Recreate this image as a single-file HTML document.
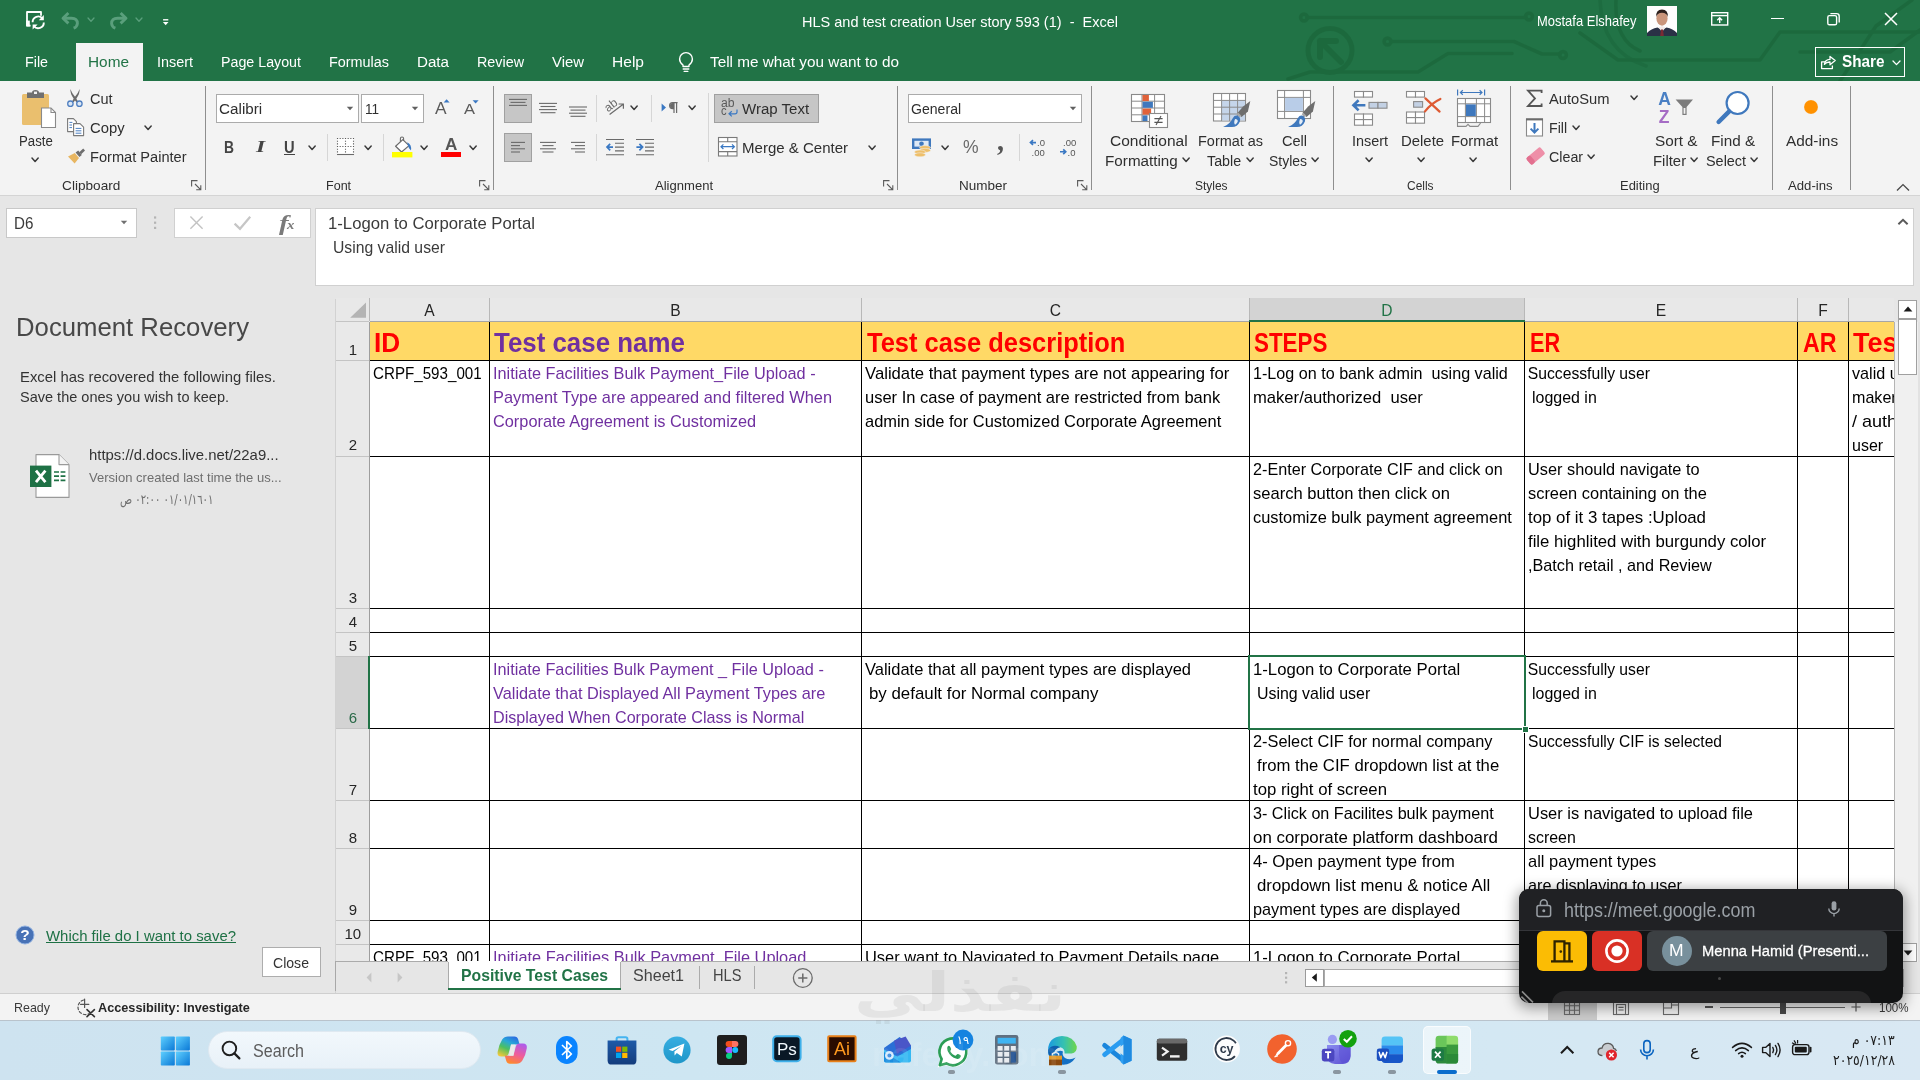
<!DOCTYPE html>
<html lang="en">
<head>
<meta charset="utf-8">
<title>HLS and test creation User story 593 (1) - Excel</title>
<style>
html,body{margin:0;padding:0;}
body{width:1920px;height:1080px;overflow:hidden;position:relative;background:#e6e6e6;font-family:"Liberation Sans",sans-serif;}
.a{position:absolute;display:block;}
.t{position:absolute;white-space:pre;transform-origin:0 50%;}
</style>
</head>
<body>
<div id="app" style="position:absolute;left:0;top:0;width:1920px;height:1080px;overflow:hidden;will-change:transform;">
<div class="a" style="left:0px;top:0px;width:1920px;height:81px;background:#217346;"></div>
<svg class="a" style="left:1280px;top:0px;" width="640" height="81" viewBox="0 0 640 81">
<g fill="none" stroke="#1a6439" stroke-width="3.6" stroke-linecap="round" stroke-linejoin="round" opacity="0.62">
<path d="M27 17.5 H246"/><circle cx="24" cy="17.5" r="3.4"/><circle cx="249" cy="16.5" r="3.4"/>
<path d="M111 41.5 H234 L262 54 H280"/><circle cx="107.5" cy="41.5" r="3.4"/><circle cx="283" cy="55" r="3.4"/>
<path d="M8 79 L30 72 H138 L168 53.5 H232"/>
<circle cx="50" cy="50.5" r="22" stroke-width="5"/>
<path d="M40 41 L61 62 M40 41 H56 M40 41 V57" stroke-width="6"/>
<path d="M300 33 L338 60 H480 L500 32 H640"/>
<path d="M336 0 Q334 40 360 51" />
<path d="M320 0 Q322 52 366 66" opacity="0.7"/>
<path d="M632 0 L596 26 L560 81"/>
<path d="M640 30 L610 52 H520"/>
</g></svg>
<svg class="a" style="left:24px;top:9px;" width="24" height="24" viewBox="0 0 24 24">
<g fill="none" stroke="#fff" stroke-width="1.8" stroke-linejoin="round">
<path d="M10.4 3 H3 V16.6 H6.6"/><path d="M10 3 H17 V6.8"/></g>
<rect x="2.2" y="11.6" width="3.6" height="5.8" fill="#fff"/>
<g fill="none" stroke="#fff" stroke-width="1.9" stroke-linecap="butt">
<path d="M8.6 13.2 A5.6 5.6 0 0 1 18.6 9.6"/><path d="M19.8 13.4 A5.6 5.6 0 0 1 9.8 17"/></g>
<path d="M19.8 6 V11.2 H14.8 Z" fill="#fff"/><path d="M8.6 20.6 V15.4 H13.6 Z" fill="#fff"/>
</svg>
<svg class="a" style="left:60px;top:10px;" width="22" height="20" viewBox="0 0 22 20"><g fill="none" stroke="#5a9f7c" stroke-width="2.9" stroke-linejoin="round"><path d="M8.4 3 L3 8.2 L8.4 13.4"/><path d="M4 8.2 H11.4 Q17.6 8.4 17.4 13.6 Q17 17 13.6 18.2"/></g></svg>
<svg class="a" style="left:86.4px;top:15.9px;" width="10" height="7.2" viewBox="0 0 10 7.2"><path d="M2 2 L5.0 5.2 L8 2" fill="none" stroke="#5a9f7c" stroke-width="1.3" stroke-linecap="round" stroke-linejoin="round"/></svg>
<svg class="a" style="left:107px;top:10px;" width="22" height="20" viewBox="0 0 22 20"><g fill="none" stroke="#5a9f7c" stroke-width="2.9" stroke-linejoin="round"><path d="M13.6 3 L19 8.2 L13.6 13.4"/><path d="M18 8.2 H10.6 Q4.4 8.4 4.6 13.6 Q5 17 8.4 18.2"/></g></svg>
<svg class="a" style="left:134.4px;top:15.9px;" width="10" height="7.2" viewBox="0 0 10 7.2"><path d="M2 2 L5.0 5.2 L8 2" fill="none" stroke="#5a9f7c" stroke-width="1.3" stroke-linecap="round" stroke-linejoin="round"/></svg>
<svg class="a" style="left:160px;top:16px;" width="10" height="10" viewBox="0 0 10 10"><path d="M3.1 3.8 H8.3" stroke="#fff" stroke-width="1.4"/><path d="M2.9 6 H8.5 L5.7 9.3 Z" fill="#fff"/></svg>
<span class="t" style="top:13.10px;font-size:15px;line-height:18px;color:#fff;left:802.00px;transform:scaleX(0.9669);">HLS and test creation User story 593 (1)  -  Excel</span>
<span class="t" style="top:12.10px;font-size:15px;line-height:18px;color:#fff;left:1537.00px;transform:scaleX(0.8647);">Mostafa Elshafey</span>
<svg class="a" style="left:1647px;top:6px;" width="30" height="30" viewBox="0 0 30 30">
<rect width="30" height="30" fill="#fdfdfd"/>
<path d="M0 30 V27 Q4 22.5 10.5 21.5 L15 24 L19.5 21.5 Q26 22.5 30 27 V30 Z" fill="#2a3146"/>
<path d="M11.5 21.5 L15 26 L18.5 21.5 L15 20 Z" fill="#f2e9e6"/>
<path d="M14 23.5 h2 l0.8 6.5 h-3.6 z" fill="#7a2a33"/>
<ellipse cx="15" cy="12.5" rx="5.6" ry="7.2" fill="#c9957b"/>
<path d="M9.2 11 Q8.6 3.6 15 3.4 Q21.4 3.6 20.8 11 Q20 7 15 6.8 Q10 7 9.2 11 Z" fill="#2b1f1c"/>
</svg>
<svg class="a" style="left:1710px;top:11px;" width="20" height="16" viewBox="0 0 20 16"><g fill="none" stroke="#fff" stroke-width="1.4"><rect x="1.7" y="1.7" width="16" height="12.3"/><path d="M1.7 4.6 H17.7"/><path d="M9.7 12 V7 M7.3 9.2 L9.7 6.8 L12.1 9.2"/></g></svg>
<div class="a" style="left:1771px;top:17.5px;width:12.5px;height:1.4px;background:#fff;"></div>
<svg class="a" style="left:1826px;top:11px;" width="16" height="16" viewBox="0 0 16 16"><g fill="none" stroke="#fff" stroke-width="1.4"><rect x="1.8" y="4.6" width="8.8" height="9.2" rx="1.6"/><path d="M4.4 2.6 H10.6 A2.6 2.6 0 0 1 13.2 5.2 V11.6"/></g></svg>
<svg class="a" style="left:1883px;top:11px;" width="16" height="16" viewBox="0 0 16 16"><path d="M2 2 L14 14 M14 2 L2 14" stroke="#fff" stroke-width="1.5" fill="none"/></svg>
<div class="a" style="left:1815px;top:47px;width:90px;height:30px;border:1px solid #fff;box-sizing:border-box;"></div>
<svg class="a" style="left:1820px;top:53px;" width="18" height="18" viewBox="0 0 18 18"><g fill="none" stroke="#fff" stroke-width="1.3" stroke-linejoin="round"><path d="M5 8.8 H1.6 V15.6 H12.4 V12.6"/><path d="M4.4 11.4 Q5 6.6 10 6.4 V3.4 L15.2 7.6 L10 11.8 V9 Q6.6 8.8 4.4 11.4 Z"/></g></svg>
<span class="t" style="top:51.91px;font-size:17px;line-height:20px;color:#fff;font-weight:700;left:1841.50px;transform:scaleX(0.8995);">Share</span>
<svg class="a" style="left:1890.5px;top:58.7px;" width="11" height="7.6" viewBox="0 0 11 7.6"><path d="M2 2 L5.5 5.6 L9 2" fill="none" stroke="#fff" stroke-width="1.3" stroke-linecap="round" stroke-linejoin="round"/></svg>
<div class="a" style="left:76px;top:43px;width:67px;height:38px;background:#f3f3f3;"></div>
<span class="t" style="top:52.43px;font-size:15.5px;line-height:19px;color:#fff;left:25.00px;transform:scaleX(0.9206);">File</span>
<span class="t" style="top:52.43px;font-size:15.5px;line-height:19px;color:#217346;left:88.00px;transform:scaleX(0.9913);">Home</span>
<span class="t" style="top:52.43px;font-size:15.5px;line-height:19px;color:#fff;left:157.00px;transform:scaleX(0.9287);">Insert</span>
<span class="t" style="top:52.43px;font-size:15.5px;line-height:19px;color:#fff;left:221.00px;transform:scaleX(0.9190);">Page Layout</span>
<span class="t" style="top:52.43px;font-size:15.5px;line-height:19px;color:#fff;left:329.00px;transform:scaleX(0.9287);">Formulas</span>
<span class="t" style="top:52.43px;font-size:15.5px;line-height:19px;color:#fff;left:417.00px;transform:scaleX(0.9771);">Data</span>
<span class="t" style="top:52.43px;font-size:15.5px;line-height:19px;color:#fff;left:477.00px;transform:scaleX(0.9247);">Review</span>
<span class="t" style="top:52.43px;font-size:15.5px;line-height:19px;color:#fff;left:552.00px;transform:scaleX(0.9602);">View</span>
<span class="t" style="top:52.43px;font-size:15.5px;line-height:19px;color:#fff;left:612.00px;transform:scaleX(1.0034);">Help</span>
<svg class="a" style="left:676px;top:50px;" width="20" height="24" viewBox="0 0 20 24"><g fill="none" stroke="#fff" stroke-width="1.4" stroke-linecap="round"><path d="M7 16.5 V15 Q3.6 12.6 3.6 9 A6.4 6.4 0 0 1 16.4 9 Q16.4 12.6 13 15 V16.5 Z" stroke-linejoin="round"/><path d="M7.2 19 H12.8 M8.2 21.4 H11.8"/></g></svg>
<span class="t" style="top:52.43px;font-size:15.5px;line-height:19px;color:#fff;left:710.00px;transform:scaleX(0.9881);">Tell me what you want to do</span>
<div class="a" style="left:0px;top:81px;width:1920px;height:114.5px;background:#f3f3f3;"></div>
<div class="a" style="left:0px;top:195px;width:1920px;height:1px;background:#d4d4d4;"></div>
<div class="a" style="left:205px;top:86.4px;width:1px;height:103.6px;background:#8e8e8e;"></div>
<div class="a" style="left:493px;top:86.4px;width:1px;height:103.6px;background:#8e8e8e;"></div>
<div class="a" style="left:897px;top:86.4px;width:1px;height:103.6px;background:#8e8e8e;"></div>
<div class="a" style="left:1091px;top:86.4px;width:1px;height:103.6px;background:#8e8e8e;"></div>
<div class="a" style="left:1333px;top:86.4px;width:1px;height:103.6px;background:#8e8e8e;"></div>
<div class="a" style="left:1510px;top:86.4px;width:1px;height:103.6px;background:#8e8e8e;"></div>
<div class="a" style="left:1772px;top:86.4px;width:1px;height:103.6px;background:#8e8e8e;"></div>
<div class="a" style="left:1850px;top:86.4px;width:1px;height:103.6px;background:#8e8e8e;"></div>
<div class="a" style="left:327.0px;top:134px;width:1px;height:27px;background:#d6d6d6;"></div>
<div class="a" style="left:383.2px;top:134px;width:1px;height:27px;background:#d6d6d6;"></div>
<div class="a" style="left:595.9px;top:95px;width:1px;height:27px;background:#d6d6d6;"></div>
<div class="a" style="left:595.9px;top:134px;width:1px;height:27px;background:#d6d6d6;"></div>
<div class="a" style="left:650.8px;top:95px;width:1px;height:27px;background:#d6d6d6;"></div>
<div class="a" style="left:707.8px;top:93px;width:1px;height:69px;background:#d6d6d6;"></div>
<div class="a" style="left:1019.0px;top:134px;width:1px;height:27px;background:#d6d6d6;"></div>
<svg class="a" style="left:20px;top:88px;" width="38" height="42" viewBox="0 0 38 42">
<rect x="2" y="6" width="27" height="31" rx="1.5" fill="#eabf6e"/>
<path d="M7 6 V4.6 H12 Q12 2 15.5 2 Q19 2 19 4.6 H24 V10 H7 Z" fill="#707070"/>
<rect x="14" y="3.6" width="3" height="2.4" fill="#f3f3f3"/>
<path d="M21.5 20 H31 L35.5 24.5 V39.5 H21.5 Z" fill="#fff" stroke="#8a8a8a" stroke-width="1.1"/>
<path d="M31 20 V24.5 H35.5" fill="none" stroke="#8a8a8a" stroke-width="1.1"/>
</svg>
<span class="t" style="top:132.03px;font-size:15.2px;line-height:18px;color:#2f2f2f;left:19.10px;transform:scaleX(0.8702);">Paste</span>
<svg class="a" style="left:30.4px;top:155.6px;" width="10.2" height="7.4" viewBox="0 0 10.2 7.4"><path d="M2 2 L5.1 5.4 L8.2 2" fill="none" stroke="#3a3a3a" stroke-width="1.5" stroke-linecap="round" stroke-linejoin="round"/></svg>
<svg class="a" style="left:65px;top:87px;" width="20" height="22" viewBox="0 0 20 22">
<path d="M5.4 2 Q6.6 6 10.6 10.6 L13 14.4 L11.4 15.2 L8.6 11.4 Q5 6.6 5.4 2 Z" fill="#6a6a6a"/>
<path d="M14.6 2 Q13.4 6 9.4 10.6 L7 14.4 L8.6 15.2 L11.4 11.4 Q15 6.6 14.6 2 Z" fill="#6a6a6a"/>
<circle cx="5.4" cy="16.7" r="2.7" fill="#dbe7f5" stroke="#4f7fc0" stroke-width="1.3"/>
<circle cx="14.4" cy="16.7" r="2.7" fill="#dbe7f5" stroke="#4f7fc0" stroke-width="1.3"/></svg>
<span class="t" style="top:90.03px;font-size:15.2px;line-height:18px;color:#2f2f2f;left:89.60px;transform:scaleX(0.9560);">Cut</span>
<svg class="a" style="left:65px;top:116px;" width="22" height="22" viewBox="0 0 22 22">
<g fill="#fff" stroke="#7a7a7a" stroke-width="1.1" stroke-linejoin="round">
<path d="M2.6 2.6 H8.4 L11.4 5.6 V15.6 H2.6 Z"/>
<path d="M8.6 7.6 H15 L18.6 11.2 V19.6 H8.6 Z"/>
</g>
<g stroke="#4a7fc1" stroke-width="1" fill="none"><path d="M4.4 6.4 H7.4 M4.4 9 H7 M4.4 11.6 H7 M10.6 12.4 H16.4 M10.6 14.8 H16.4 M10.6 17.2 H16.4"/></g>
</svg>
<span class="t" style="top:119.23px;font-size:15.2px;line-height:18px;color:#2f2f2f;left:89.60px;transform:scaleX(0.9755);">Copy</span>
<svg class="a" style="left:143.1px;top:124.3px;" width="10.2" height="7.4" viewBox="0 0 10.2 7.4"><path d="M2 2 L5.1 5.4 L8.2 2" fill="none" stroke="#3a3a3a" stroke-width="1.5" stroke-linecap="round" stroke-linejoin="round"/></svg>
<svg class="a" style="left:66px;top:146px;" width="22" height="20" viewBox="0 0 22 20">
<path d="M13.2 6.2 L17.2 2.6 L19 4.6 L15.2 8.2 Z" fill="#6e6e6e"/>
<path d="M9.6 6.4 L12.2 4.6 L15.8 9 L13.4 11 Z" fill="#6e6e6e"/>
<path d="M2 10.6 L8.8 7 L13 12 L8.6 17.6 Z" fill="#e8b661"/>
</svg>
<span class="t" style="top:148.03px;font-size:15.2px;line-height:18px;color:#2f2f2f;left:89.60px;transform:scaleX(0.9616);">Format Painter</span>
<span class="t" style="top:177.59px;font-size:13.6px;line-height:16px;color:#2f2f2f;left:62.10px;">Clipboard</span>
<svg class="a" style="left:190.5px;top:179.5px;" width="11" height="11" viewBox="0 0 11 11"><g fill="none" stroke="#5a5a5a" stroke-width="1.1"><path d="M0.6 6.5 V0.6 H6.5"/><path d="M4 4 L9.6 9.6 M9.8 5.2 V9.8 H5.2"/></g></svg>
<div class="a" style="left:216px;top:94.3px;width:143px;height:28.4px;background:#fff;border:1px solid #ababab;box-sizing:border-box;"></div>
<span class="t" style="top:99.53px;font-size:15.2px;line-height:18px;color:#2f2f2f;left:219.10px;">Calibri</span>
<svg class="a" style="left:346px;top:106.1px;" width="8" height="5" viewBox="0 0 8 5"><path d="M0.8 0.8 H7.2 L4 4.2 Z" fill="#606060"/></svg>
<div class="a" style="left:361px;top:94.3px;width:63px;height:28.4px;background:#fff;border:1px solid #ababab;box-sizing:border-box;"></div>
<span class="t" style="top:99.53px;font-size:15.2px;line-height:18px;color:#2f2f2f;left:365.10px;transform:scaleX(0.8944);">11</span>
<svg class="a" style="left:410.8px;top:106.1px;" width="8" height="5" viewBox="0 0 8 5"><path d="M0.8 0.8 H7.2 L4 4.2 Z" fill="#606060"/></svg>
<span class="t" style="top:98.48px;font-size:16.5px;line-height:20px;color:#5a5a5a;left:434.60px;transform:scaleX(1.0530);">A</span>
<svg class="a" style="left:443px;top:98px;" width="8" height="6" viewBox="0 0 8 6"><path d="M0.6 4.4 L3.6 1.2 L6.6 4.4 Z" fill="#3a78c3"/></svg>
<span class="t" style="top:99.33px;font-size:15.5px;line-height:19px;color:#5a5a5a;left:463.80px;transform:scaleX(1.0634);">A</span>
<svg class="a" style="left:472px;top:98.6px;" width="8" height="6" viewBox="0 0 8 6"><path d="M0.6 1.2 L3.6 4.4 L6.6 1.2 Z" fill="#3a78c3"/></svg>
<span class="t" style="top:137.48px;font-size:16.5px;line-height:20px;color:#444;font-weight:700;left:224.30px;transform:scaleX(0.8388);">B</span>
<span class="t" style="top:137.46px;font-size:17px;line-height:20px;color:#444;font-family:'Liberation Serif', serif;font-weight:700;font-style:italic;left:255.60px;transform:scaleX(1.3887);">I</span>
<span class="t" style="top:137.96px;font-size:16px;line-height:19px;color:#444;font-weight:700;left:284.20px;transform:scaleX(0.9168);">U</span>
<div class="a" style="left:284px;top:154.4px;width:11px;height:1.1px;background:#444;"></div>
<svg class="a" style="left:307.2px;top:144.3px;" width="10.2" height="7.4" viewBox="0 0 10.2 7.4"><path d="M2 2 L5.1 5.4 L8.2 2" fill="none" stroke="#3a3a3a" stroke-width="1.5" stroke-linecap="round" stroke-linejoin="round"/></svg>
<svg class="a" style="left:336px;top:137px;" width="20" height="20" viewBox="0 0 20 20"><rect x="1.5" y="1.5" width="16" height="16" fill="#fff"/><g fill="none" stroke="#5a5a5a" stroke-width="1.1" stroke-dasharray="1.1 1.56"><path d="M1 1.5 H18 M1 9.5 H18 M1.5 1 V17.5 M9.5 1 V17.5 M17.5 1 V17.5"/></g><path d="M1 17.5 H18" stroke="#6a6a6a" stroke-width="1.1"/></svg>
<svg class="a" style="left:363.2px;top:144.3px;" width="10.2" height="7.4" viewBox="0 0 10.2 7.4"><path d="M2 2 L5.1 5.4 L8.2 2" fill="none" stroke="#3a3a3a" stroke-width="1.5" stroke-linecap="round" stroke-linejoin="round"/></svg>
<svg class="a" style="left:391px;top:135px;" width="24" height="24" viewBox="0 0 24 24">
<path d="M4.6 11.2 L11.8 4.6 L18 10.6 L10.6 17 Z" fill="#fff" stroke="#6a6a6a" stroke-width="1.2" stroke-linejoin="round"/>
<path d="M9.4 6.8 V3.6 Q9.4 2 11 2 Q12.6 2 12.6 3.6 V5.6" fill="none" stroke="#6a6a6a" stroke-width="1.1"/>
<path d="M16.2 7.2 Q21 9.6 20 15.6 Q17.6 13.6 17 10.4 Z" fill="#3a78c3"/>
<rect x="1" y="17" width="20.4" height="5.4" fill="#ffff00"/>
</svg>
<svg class="a" style="left:419.2px;top:144.3px;" width="10.2" height="7.4" viewBox="0 0 10.2 7.4"><path d="M2 2 L5.1 5.4 L8.2 2" fill="none" stroke="#3a3a3a" stroke-width="1.5" stroke-linecap="round" stroke-linejoin="round"/></svg>
<span class="t" style="top:135.11px;font-size:17px;line-height:20px;color:#555;font-weight:700;left:444.70px;transform:scaleX(1.0097);">A</span>
<div class="a" style="left:441px;top:152px;width:20px;height:5.4px;background:#ff0000;"></div>
<svg class="a" style="left:468.2px;top:144.3px;" width="10.2" height="7.4" viewBox="0 0 10.2 7.4"><path d="M2 2 L5.1 5.4 L8.2 2" fill="none" stroke="#3a3a3a" stroke-width="1.5" stroke-linecap="round" stroke-linejoin="round"/></svg>
<span class="t" style="top:177.59px;font-size:13.6px;line-height:16px;color:#2f2f2f;left:326.10px;transform:scaleX(0.9227);">Font</span>
<svg class="a" style="left:478.8px;top:179.5px;" width="11" height="11" viewBox="0 0 11 11"><g fill="none" stroke="#5a5a5a" stroke-width="1.1"><path d="M0.6 6.5 V0.6 H6.5"/><path d="M4 4 L9.6 9.6 M9.8 5.2 V9.8 H5.2"/></g></svg>
<div class="a" style="left:504px;top:94.3px;width:28px;height:28.4px;background:#c6c6c6;border:1px solid #a0a0a0;box-sizing:border-box;"></div>
<svg class="a" style="left:507px;top:96px;" width="22" height="22" viewBox="0 0 22 22"><g stroke="#6a6a6a" stroke-width="1.1" fill="none"><path d="M2 3.4 H20"/><path d="M3.5 6.4 H18.5"/><path d="M2 9.4 H20"/></g></svg>
<svg class="a" style="left:537px;top:98px;" width="22" height="22" viewBox="0 0 22 22"><g stroke="#6a6a6a" stroke-width="1.1" fill="none"><path d="M2 5.4 H20"/><path d="M3.5 8.5 H18.5"/><path d="M2 11.6 H20"/><path d="M3.5 14.7 H18.5"/></g></svg>
<svg class="a" style="left:567px;top:102px;" width="22" height="22" viewBox="0 0 22 22"><g stroke="#6a6a6a" stroke-width="1.1" fill="none"><path d="M2 5 H20"/><path d="M3.5 8.1 H18.5"/><path d="M2 11.2 H20"/><path d="M3.5 14.3 H18.5"/></g></svg>
<svg class="a" style="left:603px;top:96px;" width="24" height="22" viewBox="0 0 24 22">
<text x="3" y="13" font-size="12" fill="#6a6a6a" transform="rotate(-38 9 12)" font-family="Liberation Sans, sans-serif">ab</text>
<path d="M6.6 18.6 L20.2 8.2 M15.6 8 H20.4 V12.8" fill="none" stroke="#6a6a6a" stroke-width="1.2"/></svg>
<svg class="a" style="left:629.4px;top:104.3px;" width="10.2" height="7.4" viewBox="0 0 10.2 7.4"><path d="M2 2 L5.1 5.4 L8.2 2" fill="none" stroke="#3a3a3a" stroke-width="1.5" stroke-linecap="round" stroke-linejoin="round"/></svg>
<svg class="a" style="left:659px;top:100px;" width="20" height="16" viewBox="0 0 20 16"><path d="M2.6 3.6 L7 7.6 L2.6 11.6 Z" fill="#3a78c3"/>
<path d="M15 2.6 V13 M17.6 2.6 V13 M18.6 2.6 H13.6 A3 3 0 0 0 13.6 8.6 H15" fill="none" stroke="#6a6a6a" stroke-width="1.2"/>
<path d="M15 3 H13.6 A2.6 2.6 0 0 0 13.6 8.2 H15 Z" fill="#6a6a6a"/></svg>
<svg class="a" style="left:687.4px;top:104.3px;" width="10.2" height="7.4" viewBox="0 0 10.2 7.4"><path d="M2 2 L5.1 5.4 L8.2 2" fill="none" stroke="#3a3a3a" stroke-width="1.5" stroke-linecap="round" stroke-linejoin="round"/></svg>
<div class="a" style="left:714px;top:94.3px;width:105px;height:28.4px;background:#c6c6c6;border:1px solid #a0a0a0;box-sizing:border-box;"></div>
<span class="t" style="top:95.67px;font-size:12.5px;line-height:15px;color:#5a5a5a;left:720.50px;transform:scaleX(0.9780);">ab</span>
<span class="t" style="top:104.37px;font-size:12.5px;line-height:15px;color:#5a5a5a;left:720.50px;transform:scaleX(0.8960);">c</span>
<svg class="a" style="left:727px;top:108px;" width="12" height="10" viewBox="0 0 12 10"><path d="M10 1.4 V4 Q10 5.8 8 5.8 H2.2 M4.8 3.2 L2 5.8 L4.8 8.4" fill="none" stroke="#3a78c3" stroke-width="1.2"/></svg>
<span class="t" style="top:99.53px;font-size:15.2px;line-height:18px;color:#2f2f2f;left:742.10px;transform:scaleX(0.9895);">Wrap Text</span>
<div class="a" style="left:504px;top:133.3px;width:28px;height:28.4px;background:#c6c6c6;border:1px solid #a0a0a0;box-sizing:border-box;"></div>
<svg class="a" style="left:507px;top:137px;" width="22" height="22" viewBox="0 0 22 22"><g stroke="#6a6a6a" stroke-width="1.1" fill="none"><path d="M4 5.4 H18"/><path d="M4 8.6 H13"/><path d="M4 11.8 H18"/><path d="M4 15 H13"/></g></svg>
<svg class="a" style="left:537px;top:137px;" width="22" height="22" viewBox="0 0 22 22"><g stroke="#6a6a6a" stroke-width="1.1" fill="none"><path d="M3 5.4 H19"/><path d="M5.5 8.6 H16.5"/><path d="M3 11.8 H19"/><path d="M5.5 15 H16.5"/></g></svg>
<svg class="a" style="left:567px;top:137px;" width="22" height="22" viewBox="0 0 22 22"><g stroke="#6a6a6a" stroke-width="1.1" fill="none"><path d="M4 5.4 H18"/><path d="M8 8.6 H18"/><path d="M4 11.8 H18"/><path d="M8 15 H18"/></g></svg>
<svg class="a" style="left:604px;top:137px;" width="22" height="20" viewBox="0 0 22 20"><g stroke="#6a6a6a" stroke-width="1.1" fill="none"><path d="M2 2.5 H20 M11 6.3 H20 M11 10.1 H20 M11 13.9 H20 M2 17.7 H20"/></g>
<path d="M9 10.1 H3.2 M6.2 6.9 L3 10.1 L6.2 13.3" fill="none" stroke="#3a78c3" stroke-width="1.7"/></svg>
<svg class="a" style="left:634px;top:137px;" width="22" height="20" viewBox="0 0 22 20"><g stroke="#6a6a6a" stroke-width="1.1" fill="none"><path d="M2 2.5 H20 M11 6.3 H20 M11 10.1 H20 M11 13.9 H20 M2 17.7 H20"/></g>
<path d="M2.4 10.1 H8.4 M5.4 6.9 L8.6 10.1 L5.4 13.3" fill="none" stroke="#3a78c3" stroke-width="1.7"/></svg>
<svg class="a" style="left:717px;top:136px;" width="22" height="22" viewBox="0 0 22 22"><g fill="#fff" stroke="#7a7a7a" stroke-width="1.1"><rect x="1.5" y="1.5" width="18.5" height="18.5"/><path d="M1.5 5.8 H20 M1.5 15.6 H20 M10.7 1.5 V5.8 M10.7 15.6 V20"/></g>
<path d="M4 10.7 H17.4 M6.4 8.4 L4 10.7 L6.4 13 M15 8.4 L17.4 10.7 L15 13" fill="none" stroke="#3a78c3" stroke-width="1.2"/></svg>
<span class="t" style="top:138.53px;font-size:15.2px;line-height:18px;color:#2f2f2f;left:742.10px;transform:scaleX(0.9897);">Merge &amp; Center</span>
<svg class="a" style="left:867.2px;top:144.3px;" width="10.2" height="7.4" viewBox="0 0 10.2 7.4"><path d="M2 2 L5.1 5.4 L8.2 2" fill="none" stroke="#3a3a3a" stroke-width="1.5" stroke-linecap="round" stroke-linejoin="round"/></svg>
<span class="t" style="top:177.59px;font-size:13.6px;line-height:16px;color:#2f2f2f;left:655.10px;transform:scaleX(0.9611);">Alignment</span>
<svg class="a" style="left:882.8px;top:179.5px;" width="11" height="11" viewBox="0 0 11 11"><g fill="none" stroke="#5a5a5a" stroke-width="1.1"><path d="M0.6 6.5 V0.6 H6.5"/><path d="M4 4 L9.6 9.6 M9.8 5.2 V9.8 H5.2"/></g></svg>
<div class="a" style="left:908px;top:94.3px;width:174px;height:28.4px;background:#fff;border:1px solid #ababab;box-sizing:border-box;"></div>
<span class="t" style="top:99.53px;font-size:15.2px;line-height:18px;color:#2f2f2f;left:911.10px;transform:scaleX(0.9270);">General</span>
<svg class="a" style="left:1069px;top:106.1px;" width="8" height="5" viewBox="0 0 8 5"><path d="M0.8 0.8 H7.2 L4 4.2 Z" fill="#606060"/></svg>
<svg class="a" style="left:910px;top:136px;" width="24" height="24" viewBox="0 0 24 24">
<rect x="2" y="2.4" width="19" height="10.6" fill="#3f78bd"/>
<rect x="4.4" y="4.8" width="14.2" height="5.8" fill="#dfe9f5"/>
<circle cx="11.5" cy="7.7" r="2.3" fill="#3f78bd"/>
<g fill="#eebf6a" stroke="#f3f3f3" stroke-width="0.5"><ellipse cx="15" cy="11.6" rx="5.6" ry="2"/><ellipse cx="15" cy="14.4" rx="5.6" ry="2"/><ellipse cx="10" cy="16" rx="5.6" ry="2"/><ellipse cx="10" cy="18.8" rx="5.6" ry="2"/></g></svg>
<svg class="a" style="left:939.5px;top:144.3px;" width="10.2" height="7.4" viewBox="0 0 10.2 7.4"><path d="M2 2 L5.1 5.4 L8.2 2" fill="none" stroke="#3a3a3a" stroke-width="1.5" stroke-linecap="round" stroke-linejoin="round"/></svg>
<span class="t" style="top:134.92px;font-size:19px;line-height:23px;color:#6a6a6a;left:962.60px;transform:scaleX(0.9227);">%</span>
<span class="t" style="top:121.88px;font-size:30px;line-height:36px;color:#555;font-family:'Liberation Serif', serif;font-weight:700;left:996.60px;transform:scaleX(0.9333);">,</span>
<svg class="a" style="left:1027px;top:137px;" width="22" height="22" viewBox="0 0 22 22"><path d="M9 5.6 H3.6 M6 3.2 L3.4 5.6 L6 8" fill="none" stroke="#3a78c3" stroke-width="1.6"/>
<text x="10" y="9.4" font-size="9.5" fill="#555" font-family="Liberation Sans, sans-serif">.0</text>
<text x="4.6" y="18.6" font-size="9.5" fill="#555" font-family="Liberation Sans, sans-serif">.00</text></svg>
<svg class="a" style="left:1057px;top:137px;" width="22" height="22" viewBox="0 0 22 22"><text x="6" y="9.4" font-size="9.5" fill="#555" font-family="Liberation Sans, sans-serif">.00</text>
<path d="M3 14.8 H8.6 M6.2 12.4 L8.8 14.8 L6.2 17.2" fill="none" stroke="#3a78c3" stroke-width="1.6"/>
<text x="10.6" y="18.6" font-size="9.5" fill="#555" font-family="Liberation Sans, sans-serif">.0</text></svg>
<span class="t" style="top:177.59px;font-size:13.6px;line-height:16px;color:#2f2f2f;left:959.10px;transform:scaleX(0.9946);">Number</span>
<svg class="a" style="left:1076.8px;top:179.5px;" width="11" height="11" viewBox="0 0 11 11"><g fill="none" stroke="#5a5a5a" stroke-width="1.1"><path d="M0.6 6.5 V0.6 H6.5"/><path d="M4 4 L9.6 9.6 M9.8 5.2 V9.8 H5.2"/></g></svg>
<svg class="a" style="left:1129px;top:92px;" width="42" height="38" viewBox="0 0 42 38">
<rect x="2.5" y="2.5" width="33" height="27" fill="#fff" stroke="#8a8a8a" stroke-width="1.1"/>
<g stroke="#8a8a8a" stroke-width="1" fill="none"><path d="M2.5 9.2 H35.5 M2.5 16 H35.5 M2.5 22.8 H35.5 M13 2.5 V29.5 M25.6 2.5 V29.5"/></g>
<rect x="13.5" y="3" width="6.4" height="6" fill="#e0623a"/>
<rect x="13.5" y="9.8" width="10.4" height="6" fill="#3f78bd"/>
<rect x="13.5" y="16.6" width="8.6" height="6" fill="#e0623a"/>
<rect x="13.5" y="23.4" width="5" height="5.6" fill="#3f78bd"/>
<rect x="20.5" y="21.5" width="18" height="14" fill="#fff" stroke="#8a8a8a" stroke-width="1.1"/>
<path d="M25.4 26.6 H33.6 M25.4 30.4 H33.6 M32 24 L27 33" stroke="#555" stroke-width="1.1" fill="none"/>
</svg>
<span class="t" style="top:132.03px;font-size:15.2px;line-height:18px;color:#2f2f2f;left:1109.60px;transform:scaleX(1.0211);">Conditional</span>
<span class="t" style="top:152.03px;font-size:15.2px;line-height:18px;color:#2f2f2f;left:1105.10px;">Formatting</span>
<svg class="a" style="left:1181.4px;top:155.8px;" width="10.2" height="7.4" viewBox="0 0 10.2 7.4"><path d="M2 2 L5.1 5.4 L8.2 2" fill="none" stroke="#3a3a3a" stroke-width="1.5" stroke-linecap="round" stroke-linejoin="round"/></svg>
<svg class="a" style="left:1211px;top:91px;" width="44" height="40" viewBox="0 0 44 40">
<rect x="2.5" y="2.5" width="32" height="27.5" fill="#fff" stroke="#8a8a8a" stroke-width="1.1"/>
<rect x="10.6" y="9.4" width="23.4" height="20" fill="#c5d5ea"/>
<g stroke="#8a8a8a" stroke-width="1" fill="none"><path d="M2.5 9.4 H34.5 M2.5 16.2 H34.5 M2.5 23 H34.5 M10.6 2.5 V30 M18.6 2.5 V30 M26.6 2.5 V30"/></g>
<g transform="translate(11.5 9.5)"><path d="M27.8 0.6 L25.4 11 L19 16.4 L15 12.4 L20.6 6 Z" fill="#6e6e6e"/><path d="M18.8 15.2 L15.8 12.2 L14.2 13.8 L17.2 16.8 Z" fill="#a8a8a8"/><path d="M14.6 15 Q18.6 16.4 17.4 21 Q15 26.8 9 26.6 H0.6 Q7.4 23.6 10.4 17.4 Q12 14.6 14.6 15 Z" fill="#3f78bd"/><path d="M12.6 18.4 Q14.8 18.2 15.4 20.4 Q14.8 23 12.6 24.2 Q10.8 22.2 12.6 18.4 Z" fill="#e4edf7"/></g></svg>
<span class="t" style="top:132.03px;font-size:15.2px;line-height:18px;color:#2f2f2f;left:1198.10px;transform:scaleX(0.9523);">Format as</span>
<span class="t" style="top:152.03px;font-size:15.2px;line-height:18px;color:#2f2f2f;left:1206.60px;transform:scaleX(0.9391);">Table</span>
<svg class="a" style="left:1244.9px;top:155.8px;" width="10.2" height="7.4" viewBox="0 0 10.2 7.4"><path d="M2 2 L5.1 5.4 L8.2 2" fill="none" stroke="#3a3a3a" stroke-width="1.5" stroke-linecap="round" stroke-linejoin="round"/></svg>
<svg class="a" style="left:1275px;top:88px;" width="44" height="43" viewBox="0 0 44 43">
<rect x="2.5" y="2.5" width="33" height="28" fill="#fff" stroke="#8a8a8a" stroke-width="1.1"/>
<g stroke="#8a8a8a" stroke-width="1" fill="none"><path d="M2.5 9.4 H35.5 M2.5 23.4 H35.5 M9.6 2.5 V30.5 M28.4 2.5 V30.5"/></g>
<rect x="10.1" y="9.9" width="17.8" height="13" fill="#b9cde8"/>
<g transform="translate(12.5 12.5)"><path d="M27.8 0.6 L25.4 11 L19 16.4 L15 12.4 L20.6 6 Z" fill="#6e6e6e"/><path d="M18.8 15.2 L15.8 12.2 L14.2 13.8 L17.2 16.8 Z" fill="#a8a8a8"/><path d="M14.6 15 Q18.6 16.4 17.4 21 Q15 26.8 9 26.6 H0.6 Q7.4 23.6 10.4 17.4 Q12 14.6 14.6 15 Z" fill="#3f78bd"/><path d="M12.6 18.4 Q14.8 18.2 15.4 20.4 Q14.8 23 12.6 24.2 Q10.8 22.2 12.6 18.4 Z" fill="#e4edf7"/></g></svg>
<span class="t" style="top:132.03px;font-size:15.2px;line-height:18px;color:#2f2f2f;left:1281.60px;transform:scaleX(0.9590);">Cell</span>
<span class="t" style="top:152.03px;font-size:15.2px;line-height:18px;color:#2f2f2f;left:1269.10px;transform:scaleX(0.9212);">Styles</span>
<svg class="a" style="left:1309.9px;top:155.8px;" width="10.2" height="7.4" viewBox="0 0 10.2 7.4"><path d="M2 2 L5.1 5.4 L8.2 2" fill="none" stroke="#3a3a3a" stroke-width="1.5" stroke-linecap="round" stroke-linejoin="round"/></svg>
<span class="t" style="top:177.59px;font-size:13.6px;line-height:16px;color:#2f2f2f;left:1195.10px;transform:scaleX(0.8803);">Styles</span>
<svg class="a" style="left:1349px;top:89px;" width="42" height="40" viewBox="0 0 42 40"><rect x="5.5" y="2.5" width="9" height="5.6" fill="#fff" stroke="#8a8a8a" stroke-width="1.1"/><rect x="14.5" y="2.5" width="9" height="5.6" fill="#fff" stroke="#8a8a8a" stroke-width="1.1"/><rect x="5.5" y="25" width="9" height="5.6" fill="#fff" stroke="#8a8a8a" stroke-width="1.1"/><rect x="14.5" y="25" width="9" height="5.6" fill="#fff" stroke="#8a8a8a" stroke-width="1.1"/><rect x="5.5" y="30.6" width="9" height="5.6" fill="#fff" stroke="#8a8a8a" stroke-width="1.1"/><rect x="14.5" y="30.6" width="9" height="5.6" fill="#fff" stroke="#8a8a8a" stroke-width="1.1"/><rect x="20" y="13.4" width="9" height="5.8" fill="#c3d1e4" stroke="#8a8a8a" stroke-width="1.1"/><rect x="29" y="13.4" width="9" height="5.8" fill="#c3d1e4" stroke="#8a8a8a" stroke-width="1.1"/><path d="M16.4 16.3 H5 M9.6 11.2 L4.4 16.3 L9.6 21.4" fill="none" stroke="#3f78bd" stroke-width="2.6"/></svg>
<span class="t" style="top:132.03px;font-size:15.2px;line-height:18px;color:#2f2f2f;left:1352.10px;transform:scaleX(0.9504);">Insert</span>
<svg class="a" style="left:1364.4px;top:155.8px;" width="10.2" height="7.4" viewBox="0 0 10.2 7.4"><path d="M2 2 L5.1 5.4 L8.2 2" fill="none" stroke="#3a3a3a" stroke-width="1.5" stroke-linecap="round" stroke-linejoin="round"/></svg>
<svg class="a" style="left:1403px;top:89px;" width="42" height="40" viewBox="0 0 42 40"><rect x="3.5" y="2.5" width="9" height="5.6" fill="#fff" stroke="#8a8a8a" stroke-width="1.1"/><rect x="12.5" y="2.5" width="9" height="5.6" fill="#fff" stroke="#8a8a8a" stroke-width="1.1"/><rect x="3.5" y="23" width="9" height="5.6" fill="#fff" stroke="#8a8a8a" stroke-width="1.1"/><rect x="12.5" y="23" width="9" height="5.6" fill="#fff" stroke="#8a8a8a" stroke-width="1.1"/><rect x="3.5" y="28.6" width="9" height="5.6" fill="#fff" stroke="#8a8a8a" stroke-width="1.1"/><rect x="12.5" y="28.6" width="9" height="5.6" fill="#fff" stroke="#8a8a8a" stroke-width="1.1"/><rect x="10.6" y="12.6" width="9" height="5.6" fill="#c3d1e4" stroke="#8a8a8a" stroke-width="1.1"/><path d="M22.4 9.4 L36.6 22.6 M37.4 10 Q28 14.4 22 22.4" fill="none" stroke="#de5a33" stroke-width="2.2" stroke-linecap="round"/></svg>
<span class="t" style="top:132.03px;font-size:15.2px;line-height:18px;color:#2f2f2f;left:1400.60px;transform:scaleX(0.9816);">Delete</span>
<svg class="a" style="left:1416.4px;top:155.8px;" width="10.2" height="7.4" viewBox="0 0 10.2 7.4"><path d="M2 2 L5.1 5.4 L8.2 2" fill="none" stroke="#3a3a3a" stroke-width="1.5" stroke-linecap="round" stroke-linejoin="round"/></svg>
<svg class="a" style="left:1454px;top:88px;" width="40" height="42" viewBox="0 0 40 42">
<path d="M3.6 1.6 V7.4 M30.6 1.6 V7.4 M6.4 4.5 H28 M8.8 2.2 L6.4 4.5 L8.8 6.8 M25.6 2.2 L28 4.5 L25.6 6.8" fill="none" stroke="#3f78bd" stroke-width="1.2"/>
<rect x="3.5" y="10.5" width="33" height="24" fill="#fff" stroke="#8a8a8a" stroke-width="1.1"/>
<g stroke="#8a8a8a" stroke-width="1" fill="none"><path d="M3.5 15.8 H36.5 M3.5 28.6 H36.5 M11.4 10.5 V34.5 M22.4 10.5 V34.5 M30.6 10.5 V34.5"/></g>
<rect x="12" y="16.4" width="9.8" height="11.6" fill="#3f78bd"/>
<path d="M3.5 34.5 V38.4 H12 L14 36.4 L16 38.4 H24 L26.6 35" fill="none" stroke="#8a8a8a" stroke-width="1.1"/>
</svg>
<span class="t" style="top:132.03px;font-size:15.2px;line-height:18px;color:#2f2f2f;left:1451.10px;transform:scaleX(0.9790);">Format</span>
<svg class="a" style="left:1468.4px;top:155.8px;" width="10.2" height="7.4" viewBox="0 0 10.2 7.4"><path d="M2 2 L5.1 5.4 L8.2 2" fill="none" stroke="#3a3a3a" stroke-width="1.5" stroke-linecap="round" stroke-linejoin="round"/></svg>
<span class="t" style="top:177.59px;font-size:13.6px;line-height:16px;color:#2f2f2f;left:1407.10px;transform:scaleX(0.8802);">Cells</span>
<svg class="a" style="left:1525px;top:88px;" width="20" height="20" viewBox="0 0 20 20"><path d="M16.6 5 V2.6 H3 L10 10.4 L3 18 H16.6 V15.6" fill="none" stroke="#555" stroke-width="1.8" stroke-linejoin="miter"/></svg>
<span class="t" style="top:90.03px;font-size:15.2px;line-height:18px;color:#2f2f2f;left:1549.10px;transform:scaleX(0.9698);">AutoSum</span>
<svg class="a" style="left:1629.4px;top:94.3px;" width="10.2" height="7.4" viewBox="0 0 10.2 7.4"><path d="M2 2 L5.1 5.4 L8.2 2" fill="none" stroke="#3a3a3a" stroke-width="1.5" stroke-linecap="round" stroke-linejoin="round"/></svg>
<svg class="a" style="left:1524px;top:116px;" width="22" height="22" viewBox="0 0 22 22"><rect x="2.5" y="3" width="16" height="17" fill="#fff" stroke="#8a8a8a" stroke-width="1.1"/><path d="M2 3.4 H19" stroke="#6a6a6a" stroke-width="2"/>
<path d="M10.5 7 V16.4 M6.6 12.6 L10.5 16.6 L14.4 12.6" fill="none" stroke="#3f78bd" stroke-width="2"/></svg>
<span class="t" style="top:119.23px;font-size:15.2px;line-height:18px;color:#2f2f2f;left:1549.10px;transform:scaleX(0.9327);">Fill</span>
<svg class="a" style="left:1571.1px;top:123.5px;" width="10.2" height="7.4" viewBox="0 0 10.2 7.4"><path d="M2 2 L5.1 5.4 L8.2 2" fill="none" stroke="#3a3a3a" stroke-width="1.5" stroke-linecap="round" stroke-linejoin="round"/></svg>
<svg class="a" style="left:1525px;top:146px;" width="22" height="20" viewBox="0 0 22 20"><g transform="rotate(-40 10.5 10)"><rect x="1.4" y="5.6" width="18.4" height="9" rx="2" fill="#ee8fa8"/><rect x="1.4" y="5.6" width="5.4" height="9" rx="2" fill="#e2708f"/></g></svg>
<span class="t" style="top:148.03px;font-size:15.2px;line-height:18px;color:#2f2f2f;left:1549.10px;transform:scaleX(0.9395);">Clear</span>
<svg class="a" style="left:1586.4px;top:152.5px;" width="10.2" height="7.4" viewBox="0 0 10.2 7.4"><path d="M2 2 L5.1 5.4 L8.2 2" fill="none" stroke="#3a3a3a" stroke-width="1.5" stroke-linecap="round" stroke-linejoin="round"/></svg>
<svg class="a" style="left:1656px;top:88px;" width="40" height="40" viewBox="0 0 40 40">
<text x="2.2" y="17" font-size="17.5" font-weight="700" fill="#4a80c4" font-family="Liberation Sans, sans-serif">A</text>
<text x="2.8" y="34.6" font-size="17.5" font-weight="700" fill="#a56cc4" font-family="Liberation Sans, sans-serif">Z</text>
<path d="M19.6 11.4 H37 L30.6 19 V27 H26.4 V19 Z" fill="#7c7c7c"/>
<path d="M27.6 20 V25.8 H29.4 V20 Z" fill="#f3f3f3"/>
</svg>
<span class="t" style="top:132.03px;font-size:15.2px;line-height:18px;color:#2f2f2f;left:1655.10px;transform:scaleX(1.0090);">Sort &amp;</span>
<span class="t" style="top:152.03px;font-size:15.2px;line-height:18px;color:#2f2f2f;left:1653.10px;transform:scaleX(0.9807);">Filter</span>
<svg class="a" style="left:1689.4px;top:155.8px;" width="10.2" height="7.4" viewBox="0 0 10.2 7.4"><path d="M2 2 L5.1 5.4 L8.2 2" fill="none" stroke="#3a3a3a" stroke-width="1.5" stroke-linecap="round" stroke-linejoin="round"/></svg>
<svg class="a" style="left:1714px;top:89px;" width="40" height="38" viewBox="0 0 40 38">
<circle cx="23.6" cy="14" r="11" fill="#fff" stroke="#3f78bd" stroke-width="2.2"/>
<path d="M15.2 22.4 L4.6 33" stroke="#3f78bd" stroke-width="4.4" stroke-linecap="round"/></svg>
<span class="t" style="top:132.03px;font-size:15.2px;line-height:18px;color:#2f2f2f;left:1711.10px;transform:scaleX(1.0044);">Find &amp;</span>
<span class="t" style="top:152.03px;font-size:15.2px;line-height:18px;color:#2f2f2f;left:1706.10px;transform:scaleX(0.9498);">Select</span>
<svg class="a" style="left:1749.4px;top:155.8px;" width="10.2" height="7.4" viewBox="0 0 10.2 7.4"><path d="M2 2 L5.1 5.4 L8.2 2" fill="none" stroke="#3a3a3a" stroke-width="1.5" stroke-linecap="round" stroke-linejoin="round"/></svg>
<span class="t" style="top:177.59px;font-size:13.6px;line-height:16px;color:#2f2f2f;left:1620.10px;transform:scaleX(0.9524);">Editing</span>
<div class="a" style="left:1804px;top:100px;width:14.4px;height:14px;background:radial-gradient(circle, #ff9100 0%, #ff9100 62%, rgba(255,170,70,0.0) 100%);border-radius:8px;"></div>
<span class="t" style="top:132.03px;font-size:15.2px;line-height:18px;color:#2f2f2f;left:1786.10px;transform:scaleX(1.0117);">Add-ins</span>
<span class="t" style="top:177.59px;font-size:13.6px;line-height:16px;color:#2f2f2f;left:1788.10px;transform:scaleX(0.9676);">Add-ins</span>
<svg class="a" style="left:1895px;top:181px;" width="16" height="12" viewBox="0 0 16 12"><path d="M2 9.4 L8 3.6 L14 9.4" fill="none" stroke="#4a4a4a" stroke-width="1.4"/></svg>
<div class="a" style="left:6.4px;top:208.4px;width:130.4px;height:29.2px;background:#fff;border:1px solid #c8c8c8;box-sizing:border-box;"></div>
<span class="t" style="top:213.56px;font-size:16px;line-height:19px;color:#3a3a3a;left:13.80px;transform:scaleX(0.9485);">D6</span>
<svg class="a" style="left:120.2px;top:220.1px;" width="8" height="5" viewBox="0 0 8 5"><path d="M0.8 0.8 H7.2 L4 4.2 Z" fill="#707070"/></svg>
<svg class="a" style="left:152px;top:214px;" width="6" height="18" viewBox="0 0 6 18"><g fill="#b4b4b4"><rect x="2" y="2.4" width="2.2" height="2.2"/><rect x="2" y="7.6" width="2.2" height="2.2"/><rect x="2" y="12.8" width="2.2" height="2.2"/></g></svg>
<div class="a" style="left:174.2px;top:208.4px;width:136.6px;height:29.2px;background:#fff;border:1px solid #d0d0d0;box-sizing:border-box;"></div>
<svg class="a" style="left:187px;top:213px;" width="20" height="20" viewBox="0 0 20 20"><path d="M3.4 3.6 L15.6 15.8 M15.6 3.6 L3.4 15.8" stroke="#c3c3c3" stroke-width="1.4" fill="none"/></svg>
<svg class="a" style="left:232px;top:213px;" width="22" height="20" viewBox="0 0 22 20"><path d="M2.6 10.6 L8 15.8 L18.2 3.8" stroke="#c6c6c6" stroke-width="2.2" fill="none"/></svg>
<span class="t" style="top:210.85px;font-size:20px;line-height:24px;color:#7a7a7a;font-family:'Liberation Serif', serif;font-weight:700;font-style:italic;left:278.60px;transform:scaleX(1.4389);">f</span>
<span class="t" style="top:216.64px;font-size:13.5px;line-height:16px;color:#7a7a7a;font-family:'Liberation Serif', serif;font-weight:700;font-style:italic;left:287.40px;transform:scaleX(1.0963);">x</span>
<div class="a" style="left:314.6px;top:208.4px;width:1599.4px;height:77.2px;background:#fff;border:1px solid #d0d0d0;box-sizing:border-box;"></div>
<span class="t" style="top:213.96px;font-size:15.7px;line-height:19px;color:#3b3b3b;left:328.00px;transform:scaleX(1.0644);">1-Logon to Corporate Portal</span>
<span class="t" style="top:237.96px;font-size:15.7px;line-height:19px;color:#3b3b3b;left:333.00px;transform:scaleX(1.0035);">Using valid user</span>
<svg class="a" style="left:1896px;top:217px;" width="14" height="10" viewBox="0 0 14 10"><path d="M2.4 7.2 L7 2.8 L11.6 7.2" fill="none" stroke="#5a5a5a" stroke-width="2"/></svg>
<span class="t" style="top:312.46px;font-size:25.5px;line-height:31px;color:#484848;left:16.00px;transform:scaleX(1.0086);">Document Recovery</span>
<span class="t" style="top:367.80px;font-size:15px;line-height:18px;color:#333;left:20.20px;transform:scaleX(0.9897);">Excel has recovered the following files.</span>
<span class="t" style="top:387.60px;font-size:15px;line-height:18px;color:#333;left:20.20px;transform:scaleX(0.9677);">Save the ones you wish to keep.</span>
<svg class="a" style="left:28px;top:452px;" width="44" height="48" viewBox="0 0 44 48">
<path d="M8 2.6 H31 L41 12.6 V45.4 H8 Z" fill="#fff" stroke="#9a9a9a" stroke-width="1.1" stroke-linejoin="round"/>
<path d="M31 2.6 V12.6 H41" fill="#f3f3f3" stroke="#9a9a9a" stroke-width="1.1" stroke-linejoin="round"/>
<rect x="2" y="13.6" width="21.4" height="21.4" fill="#1e7145"/>
<path d="M8 18.6 L17.4 30.2 M17.4 18.6 L8 30.2" stroke="#fff" stroke-width="2.8" fill="none"/>
<g stroke="#1e7145" stroke-width="1.7"><path d="M26 20 H31 M32.6 20 H37.4 M26 24.2 H31 M32.6 24.2 H37.4 M26 28.4 H31 M32.6 28.4 H37.4"/></g>
</svg>
<span class="t" style="top:446.20px;font-size:15px;line-height:18px;color:#333;left:89.00px;transform:scaleX(0.9929);">https://d.docs.live.net/22a9...</span>
<span class="t" style="top:469.62px;font-size:13.5px;line-height:16px;color:#6e6e6e;left:89.00px;transform:scaleX(0.9649);">Version created last time the us...</span>
<span class="t" style="top:490.93px;font-size:13.5px;line-height:16px;color:#6e6e6e;font-family:'DejaVu Sans', 'Liberation Sans', sans-serif;direction:ltr;unicode-bidi:bidi-override;left:120.40px;transform:scaleX(0.7439);">ص ٠٢:٠٠ ٠١/٠١/١٦٠١</span>
<svg class="a" style="left:15px;top:925px;" width="20" height="20" viewBox="0 0 20 20"><circle cx="10" cy="10" r="9" fill="#4872b6"/><circle cx="10" cy="10" r="9" fill="none" stroke="#8fb0e0" stroke-width="1"/>
<text x="10" y="15.4" font-size="15.5" font-weight="700" fill="#fff" text-anchor="middle" font-family="Liberation Sans, sans-serif">?</text></svg>
<span class="t" style="top:926.50px;font-size:15px;line-height:18px;color:#1e7145;text-decoration:underline;left:46.00px;transform:scaleX(0.9951);">Which file do I want to save?</span>
<div class="a" style="left:262.2px;top:947.3px;width:58.6px;height:29.6px;background:#fff;border:1px solid #adadad;box-sizing:border-box;"></div>
<span class="t" style="top:953.60px;font-size:15px;line-height:18px;color:#333;left:273.00px;transform:scaleX(0.9385);">Close</span>
<div class="a" style="left:335.4px;top:299px;width:1px;height:694px;background:#d2d2d2;"></div>
<div class="a" style="left:370px;top:322px;width:1524px;height:640px;background:#fff;"></div>
<div class="a" style="left:336px;top:298px;width:1559px;height:24px;background:#e8e8e8;"></div>
<div class="a" style="left:1250px;top:298px;width:274px;height:22px;background:#d3d3d3;"></div>
<div class="a" style="left:1249px;top:320px;width:276px;height:2px;background:#217346;"></div>
<svg class="a" style="left:349px;top:302px;" width="18" height="17" viewBox="0 0 18 17"><path d="M17 0.4 V15.8 H1.2 Z" fill="#b4b4b4"/></svg>
<div class="a" style="left:369px;top:298px;width:1px;height:23px;background:#b8b8b8;"></div>
<div class="a" style="left:489px;top:298px;width:1px;height:23px;background:#b8b8b8;"></div>
<div class="a" style="left:861px;top:298px;width:1px;height:23px;background:#b8b8b8;"></div>
<div class="a" style="left:1249px;top:298px;width:1px;height:23px;background:#b8b8b8;"></div>
<div class="a" style="left:1524px;top:298px;width:1px;height:23px;background:#b8b8b8;"></div>
<div class="a" style="left:1797px;top:298px;width:1px;height:23px;background:#b8b8b8;"></div>
<div class="a" style="left:1848px;top:298px;width:1px;height:23px;background:#b8b8b8;"></div>
<span class="t" style="top:300.99px;font-size:15.6px;line-height:19px;color:#262626;left:424.30px;">A</span>
<span class="t" style="top:300.99px;font-size:15.6px;line-height:19px;color:#262626;left:670.30px;">B</span>
<span class="t" style="top:300.99px;font-size:15.6px;line-height:19px;color:#262626;left:1049.87px;">C</span>
<span class="t" style="top:300.99px;font-size:15.6px;line-height:19px;color:#217346;left:1381.37px;">D</span>
<span class="t" style="top:300.99px;font-size:15.6px;line-height:19px;color:#262626;left:1655.80px;">E</span>
<span class="t" style="top:300.99px;font-size:15.6px;line-height:19px;color:#262626;left:1818.23px;">F</span>
<div class="a" style="left:370px;top:322px;width:1524px;height:38px;background:#ffd966;"></div>
<div class="a" style="left:336px;top:322px;width:33px;height:640px;background:#e9e9e9;"></div>
<div class="a" style="left:336px;top:657px;width:33px;height:71px;background:#d3d3d3;"></div>
<div class="a" style="left:336px;top:321px;width:33px;height:1px;background:#c4c4c4;"></div>
<div class="a" style="left:336px;top:360px;width:33px;height:1px;background:#c4c4c4;"></div>
<div class="a" style="left:336px;top:456px;width:33px;height:1px;background:#c4c4c4;"></div>
<div class="a" style="left:336px;top:608px;width:33px;height:1px;background:#c4c4c4;"></div>
<div class="a" style="left:336px;top:632px;width:33px;height:1px;background:#c4c4c4;"></div>
<div class="a" style="left:336px;top:656px;width:33px;height:1px;background:#c4c4c4;"></div>
<div class="a" style="left:336px;top:728px;width:33px;height:1px;background:#c4c4c4;"></div>
<div class="a" style="left:336px;top:800px;width:33px;height:1px;background:#c4c4c4;"></div>
<div class="a" style="left:336px;top:848px;width:33px;height:1px;background:#c4c4c4;"></div>
<div class="a" style="left:336px;top:920px;width:33px;height:1px;background:#c4c4c4;"></div>
<div class="a" style="left:336px;top:944px;width:33px;height:1px;background:#c4c4c4;"></div>
<div class="a" style="left:369px;top:322px;width:1px;height:640px;background:#9e9e9e;"></div>
<div class="a" style="left:368.3px;top:656px;width:1.7px;height:73px;background:#217346;"></div>
<span class="t" style="top:341.00px;font-size:15px;line-height:18px;color:#262626;left:348.63px;">1</span>
<span class="t" style="top:436.40px;font-size:15px;line-height:18px;color:#262626;left:348.63px;">2</span>
<span class="t" style="top:588.60px;font-size:15px;line-height:18px;color:#262626;left:348.63px;">3</span>
<span class="t" style="top:612.60px;font-size:15px;line-height:18px;color:#262626;left:348.63px;">4</span>
<span class="t" style="top:636.60px;font-size:15px;line-height:18px;color:#262626;left:348.63px;">5</span>
<span class="t" style="top:708.60px;font-size:15px;line-height:18px;color:#2a6a48;left:348.63px;">6</span>
<span class="t" style="top:780.60px;font-size:15px;line-height:18px;color:#262626;left:348.63px;">7</span>
<span class="t" style="top:828.60px;font-size:15px;line-height:18px;color:#262626;left:348.63px;">8</span>
<span class="t" style="top:900.60px;font-size:15px;line-height:18px;color:#262626;left:348.63px;">9</span>
<span class="t" style="top:924.60px;font-size:15px;line-height:18px;color:#262626;left:344.46px;">10</span>
<div class="a" style="left:370px;top:322px;width:1524px;height:640px;overflow:hidden;">
<span class="t" style="top:3.88px;font-size:27.2px;line-height:33px;color:#ff0000;font-weight:700;left:4.40px;transform:scaleX(0.9637);">ID</span>
<span class="t" style="top:3.88px;font-size:27.2px;line-height:33px;color:#7030a0;font-weight:700;left:123.80px;transform:scaleX(0.9516);">Test case name</span>
<span class="t" style="top:3.88px;font-size:27.2px;line-height:33px;color:#ff0000;font-weight:700;left:496.60px;transform:scaleX(0.9362);">Test case description</span>
<span class="t" style="top:3.88px;font-size:27.2px;line-height:33px;color:#ff0000;font-weight:700;left:884.40px;transform:scaleX(0.8233);">STEPS</span>
<span class="t" style="top:3.88px;font-size:27.2px;line-height:33px;color:#ff0000;font-weight:700;left:1160.00px;transform:scaleX(0.7993);">ER</span>
<span class="t" style="top:3.88px;font-size:27.2px;line-height:33px;color:#ff0000;font-weight:700;left:1432.60px;transform:scaleX(0.8554);">AR</span>
<span class="t" style="top:3.88px;font-size:27.2px;line-height:33px;color:#ff0000;font-weight:700;left:1482.60px;transform:scaleX(0.9919);">Test Data</span>
<span class="t" style="top:42.31px;font-size:15.7px;line-height:19px;color:#000;left:2.60px;transform:scaleX(0.9661);">CRPF_593_001</span>
<span class="t" style="top:42.31px;font-size:15.7px;line-height:19px;color:#7030a0;left:122.60px;transform:scaleX(1.0393);">Initiate Facilities Bulk Payment_File Upload -</span>
<span class="t" style="top:66.31px;font-size:15.7px;line-height:19px;color:#7030a0;left:122.60px;transform:scaleX(1.0431);">Payment Type are appeared and filtered When</span>
<span class="t" style="top:90.31px;font-size:15.7px;line-height:19px;color:#7030a0;left:122.60px;transform:scaleX(1.0408);">Corporate Agreement is Customized</span>
<span class="t" style="top:42.31px;font-size:15.7px;line-height:19px;color:#000;left:494.80px;transform:scaleX(1.0636);">Validate that payment types are not appearing for</span>
<span class="t" style="top:66.31px;font-size:15.7px;line-height:19px;color:#000;left:494.80px;transform:scaleX(1.0526);">user In case of payment are restricted from bank</span>
<span class="t" style="top:90.31px;font-size:15.7px;line-height:19px;color:#000;left:494.80px;transform:scaleX(1.0475);">admin side for Customized Corporate Agreement</span>
<span class="t" style="top:42.31px;font-size:15.7px;line-height:19px;color:#000;left:882.80px;transform:scaleX(1.0287);">1-Log on to bank admin  using valid</span>
<span class="t" style="top:66.31px;font-size:15.7px;line-height:19px;color:#000;left:882.80px;transform:scaleX(1.0584);">maker/authorized  user</span>
<span class="t" style="top:42.31px;font-size:15.7px;line-height:19px;color:#000;left:1157.80px;">Successfully user</span>
<span class="t" style="top:66.31px;font-size:15.7px;line-height:19px;color:#000;left:1161.80px;transform:scaleX(1.0175);">logged in</span>
<span class="t" style="top:42.31px;font-size:15.7px;line-height:19px;color:#000;left:1481.80px;transform:scaleX(1.0307);">valid user</span>
<span class="t" style="top:66.31px;font-size:15.7px;line-height:19px;color:#000;left:1481.80px;transform:scaleX(1.0254);">maker</span>
<span class="t" style="top:90.31px;font-size:15.7px;line-height:19px;color:#000;left:1481.80px;transform:scaleX(1.1490);">/ authorized</span>
<span class="t" style="top:114.31px;font-size:15.7px;line-height:19px;color:#000;left:1481.80px;transform:scaleX(1.0219);">user</span>
<span class="t" style="top:138.31px;font-size:15.7px;line-height:19px;color:#000;left:882.80px;transform:scaleX(1.0306);">2-Enter Corporate CIF and click on</span>
<span class="t" style="top:162.31px;font-size:15.7px;line-height:19px;color:#000;left:882.80px;transform:scaleX(1.0556);">search button then click on</span>
<span class="t" style="top:186.31px;font-size:15.7px;line-height:19px;color:#000;left:882.80px;transform:scaleX(1.0451);">customize bulk payment agreement</span>
<span class="t" style="top:138.31px;font-size:15.7px;line-height:19px;color:#000;left:1157.80px;transform:scaleX(1.0411);">User should navigate to</span>
<span class="t" style="top:162.31px;font-size:15.7px;line-height:19px;color:#000;left:1157.80px;transform:scaleX(1.0459);">screen containing on the</span>
<span class="t" style="top:186.31px;font-size:15.7px;line-height:19px;color:#000;left:1157.80px;transform:scaleX(1.0742);">top of it 3 tapes :Upload</span>
<span class="t" style="top:210.31px;font-size:15.7px;line-height:19px;color:#000;left:1157.80px;transform:scaleX(1.0670);">file highlited with burgundy color</span>
<span class="t" style="top:234.31px;font-size:15.7px;line-height:19px;color:#000;left:1157.80px;transform:scaleX(1.0332);">,Batch retail , and Review</span>
<span class="t" style="top:338.31px;font-size:15.7px;line-height:19px;color:#7030a0;left:122.60px;transform:scaleX(1.0366);">Initiate Facilities Bulk Payment _ File Upload -</span>
<span class="t" style="top:362.31px;font-size:15.7px;line-height:19px;color:#7030a0;left:122.60px;transform:scaleX(1.0405);">Validate that Displayed All Payment Types are</span>
<span class="t" style="top:386.31px;font-size:15.7px;line-height:19px;color:#7030a0;left:122.60px;transform:scaleX(1.0287);">Displayed When Corporate Class is Normal</span>
<span class="t" style="top:338.31px;font-size:15.7px;line-height:19px;color:#000;left:494.80px;transform:scaleX(1.0510);">Validate that all payment types are displayed</span>
<span class="t" style="top:362.31px;font-size:15.7px;line-height:19px;color:#000;left:498.80px;transform:scaleX(1.0738);">by default for Normal company</span>
<span class="t" style="top:338.31px;font-size:15.7px;line-height:19px;color:#000;left:882.80px;transform:scaleX(1.0654);">1-Logon to Corporate Portal</span>
<span class="t" style="top:362.31px;font-size:15.7px;line-height:19px;color:#000;left:886.80px;transform:scaleX(1.0143);">Using valid user</span>
<span class="t" style="top:338.31px;font-size:15.7px;line-height:19px;color:#000;left:1157.80px;">Successfully user</span>
<span class="t" style="top:362.31px;font-size:15.7px;line-height:19px;color:#000;left:1161.80px;transform:scaleX(1.0175);">logged in</span>
<span class="t" style="top:410.31px;font-size:15.7px;line-height:19px;color:#000;left:882.80px;transform:scaleX(1.0401);">2-Select CIF for normal company</span>
<span class="t" style="top:434.31px;font-size:15.7px;line-height:19px;color:#000;left:886.80px;transform:scaleX(1.0642);">from the CIF dropdown list at the</span>
<span class="t" style="top:458.31px;font-size:15.7px;line-height:19px;color:#000;left:882.80px;transform:scaleX(1.0671);">top right of screen</span>
<span class="t" style="top:410.31px;font-size:15.7px;line-height:19px;color:#000;left:1157.80px;transform:scaleX(0.9934);">Successfully CIF is selected</span>
<span class="t" style="top:482.31px;font-size:15.7px;line-height:19px;color:#000;left:882.80px;transform:scaleX(1.0305);">3- Click on Facilites bulk payment</span>
<span class="t" style="top:506.31px;font-size:15.7px;line-height:19px;color:#000;left:882.80px;transform:scaleX(1.0764);">on corporate platform dashboard</span>
<span class="t" style="top:482.31px;font-size:15.7px;line-height:19px;color:#000;left:1157.80px;transform:scaleX(1.0488);">User is navigated to upload file</span>
<span class="t" style="top:506.31px;font-size:15.7px;line-height:19px;color:#000;left:1157.80px;transform:scaleX(1.0150);">screen</span>
<span class="t" style="top:530.31px;font-size:15.7px;line-height:19px;color:#000;left:882.80px;transform:scaleX(1.0567);">4- Open payment type from</span>
<span class="t" style="top:554.31px;font-size:15.7px;line-height:19px;color:#000;left:886.80px;transform:scaleX(1.0696);">dropdown list menu &amp; notice All</span>
<span class="t" style="top:578.31px;font-size:15.7px;line-height:19px;color:#000;left:882.80px;transform:scaleX(1.0375);">payment types are displayed</span>
<span class="t" style="top:530.31px;font-size:15.7px;line-height:19px;color:#000;left:1157.80px;transform:scaleX(1.0501);">all payment types</span>
<span class="t" style="top:554.31px;font-size:15.7px;line-height:19px;color:#000;left:1157.80px;transform:scaleX(1.0313);">are displaying to user</span>
<span class="t" style="top:626.31px;font-size:15.7px;line-height:19px;color:#000;left:2.60px;transform:scaleX(0.9661);">CRPF_593_001</span>
<span class="t" style="top:626.31px;font-size:15.7px;line-height:19px;color:#7030a0;left:122.60px;transform:scaleX(1.0418);">Initiate Facilities Bulk Payment_File Upload</span>
<span class="t" style="top:626.31px;font-size:15.7px;line-height:19px;color:#000;left:494.80px;transform:scaleX(1.0469);">User want to Navigated to Payment Details page</span>
<span class="t" style="top:626.31px;font-size:15.7px;line-height:19px;color:#000;left:882.80px;transform:scaleX(1.0654);">1-Logon to Corporate Portal</span>
</div>
<div class="a" style="left:370px;top:360px;width:1524px;height:1px;background:#000;"></div>
<div class="a" style="left:370px;top:456px;width:1524px;height:1px;background:#000;"></div>
<div class="a" style="left:370px;top:608px;width:1524px;height:1px;background:#000;"></div>
<div class="a" style="left:370px;top:632px;width:1524px;height:1px;background:#000;"></div>
<div class="a" style="left:370px;top:656px;width:1524px;height:1px;background:#000;"></div>
<div class="a" style="left:370px;top:728px;width:1524px;height:1px;background:#000;"></div>
<div class="a" style="left:370px;top:800px;width:1524px;height:1px;background:#000;"></div>
<div class="a" style="left:370px;top:848px;width:1524px;height:1px;background:#000;"></div>
<div class="a" style="left:370px;top:920px;width:1524px;height:1px;background:#000;"></div>
<div class="a" style="left:370px;top:944px;width:1524px;height:1px;background:#000;"></div>
<div class="a" style="left:489px;top:322px;width:1px;height:640px;background:#000;"></div>
<div class="a" style="left:861px;top:322px;width:1px;height:640px;background:#000;"></div>
<div class="a" style="left:1249px;top:322px;width:1px;height:640px;background:#000;"></div>
<div class="a" style="left:1524px;top:322px;width:1px;height:640px;background:#000;"></div>
<div class="a" style="left:1797px;top:322px;width:1px;height:640px;background:#000;"></div>
<div class="a" style="left:1848px;top:322px;width:1px;height:640px;background:#000;"></div>
<div class="a" style="left:370px;top:321px;width:1524px;height:1px;background:#a6a6a6;"></div>
<div class="a" style="left:1249px;top:320px;width:276px;height:2px;background:#217346;"></div>
<div class="a" style="left:1248px;top:655px;width:278px;height:75px;border:2px solid #217346;box-sizing:border-box;"></div>
<div class="a" style="left:1521.5px;top:725.5px;width:7px;height:7px;background:#217346;border:1px solid #fff;box-sizing:border-box;"></div>
<div class="a" style="left:1894px;top:298px;width:26px;height:664px;background:#e6e6e6;"></div>
<div class="a" style="left:1894px;top:322px;width:1px;height:640px;background:#b4b4b4;"></div>
<div class="a" style="left:1895px;top:322px;width:23px;height:640px;background:#f0f0f0;"></div>
<div class="a" style="left:1917.6px;top:322px;width:2.4px;height:640px;background:#e2e2e2;"></div>
<div class="a" style="left:1898px;top:300px;width:19px;height:19px;background:#fff;border:1px solid #a0a0a0;box-sizing:border-box;"></div>
<svg class="a" style="left:1902.5px;top:304.6px;" width="10" height="8" viewBox="0 0 10 8"><path d="M0.6 6.4 L5 1.4 L9.4 6.4 Z" fill="#1a1a1a"/></svg>
<div class="a" style="left:1898px;top:319px;width:19px;height:56px;background:#fff;border:1px solid #a0a0a0;box-sizing:border-box;"></div>
<div class="a" style="left:1898px;top:943px;width:19px;height:19px;background:#fff;border:1px solid #a0a0a0;box-sizing:border-box;"></div>
<svg class="a" style="left:1902.5px;top:948.6px;" width="10" height="8" viewBox="0 0 10 8"><path d="M0.6 1.6 L5 6.6 L9.4 1.6 Z" fill="#1a1a1a"/></svg>
<div class="a" style="left:336px;top:962px;width:1584px;height:31px;background:#e6e6e6;"></div>
<div class="a" style="left:336px;top:961px;width:1561px;height:1px;background:#ababab;"></div>
<div class="a" style="left:335px;top:961px;width:1px;height:30px;background:#a8a8a8;"></div>
<svg class="a" style="left:364px;top:971px;" width="10" height="13" viewBox="0 0 10 13"><path d="M7.4 1.6 L2.6 6.5 L7.4 11.4 Z" fill="#c6c6c6"/></svg>
<svg class="a" style="left:395px;top:971px;" width="10" height="13" viewBox="0 0 10 13"><path d="M2.6 1.6 L7.4 6.5 L2.6 11.4 Z" fill="#c6c6c6"/></svg>
<div class="a" style="left:448px;top:961px;width:173px;height:27.6px;background:#fff;"></div>
<div class="a" style="left:448px;top:962px;width:1px;height:28px;background:#ababab;"></div>
<div class="a" style="left:620px;top:962px;width:1px;height:28px;background:#ababab;"></div>
<div class="a" style="left:448px;top:988px;width:173px;height:2px;background:#217346;"></div>
<span class="t" style="top:964.88px;font-size:16.5px;line-height:20px;color:#217346;font-weight:700;left:461.00px;transform:scaleX(0.9559);">Positive Test Cases</span>
<span class="t" style="top:964.88px;font-size:16.5px;line-height:20px;color:#444;left:633.30px;transform:scaleX(0.9752);">Sheet1</span>
<div class="a" style="left:699px;top:965.6px;width:1px;height:23px;background:#ababab;"></div>
<span class="t" style="top:964.88px;font-size:16.5px;line-height:20px;color:#444;left:712.50px;transform:scaleX(0.8845);">HLS</span>
<div class="a" style="left:754px;top:965.6px;width:1px;height:23px;background:#ababab;"></div>
<svg class="a" style="left:791px;top:966px;" width="24" height="24" viewBox="0 0 24 24"><circle cx="11.8" cy="12" r="9.4" fill="none" stroke="#6a6a6a" stroke-width="1.3"/><path d="M11.8 7.4 V16.6 M7.2 12 H16.4" stroke="#6a6a6a" stroke-width="1.5" fill="none"/></svg>
<svg class="a" style="left:1283px;top:970px;" width="6" height="16" viewBox="0 0 6 16"><g fill="#b4b4b4"><rect x="2" y="2" width="2.2" height="2.2"/><rect x="2" y="6.6" width="2.2" height="2.2"/><rect x="2" y="11.2" width="2.2" height="2.2"/></g></svg>
<div class="a" style="left:1324px;top:968.6px;width:580px;height:18.4px;background:#fff;border:1px solid #ababab;box-sizing:border-box;"></div>
<div class="a" style="left:1305.4px;top:968.6px;width:19px;height:18.4px;background:#fff;border:1px solid #9a9a9a;box-sizing:border-box;"></div>
<svg class="a" style="left:1310px;top:972px;" width="9" height="11" viewBox="0 0 9 11"><path d="M6.8 1.2 L1.8 5.5 L6.8 9.8 Z" fill="#1a1a1a"/></svg>
<div class="a" style="left:0px;top:993px;width:1920px;height:27px;background:#f3f3f3;"></div>
<div class="a" style="left:0px;top:993px;width:1920px;height:1px;background:#cfcfcf;"></div>
<span class="t" style="top:999.52px;font-size:13.5px;line-height:16px;color:#3a3a3a;left:14.00px;transform:scaleX(0.9223);">Ready</span>
<svg class="a" style="left:75px;top:997px;" width="22" height="21" viewBox="0 0 22 21"><g fill="none" stroke="#555" stroke-width="1.2" stroke-linecap="round">
<path d="M8.6 3 A7.4 7.4 0 1 0 14.4 16.4" stroke-dasharray="2.6 2.2"/>
<path d="M9.6 2 V10.4 M5.6 7.4 H13.8"/>
<path d="M12 12.6 L19.4 19.6 M19.4 12.6 L12 19.6" stroke="#333" stroke-width="1.6"/></g></svg>
<span class="t" style="top:999.52px;font-size:13.5px;line-height:16px;color:#262626;font-weight:700;left:98.30px;transform:scaleX(0.9409);">Accessibility: Investigate</span>
<div class="a" style="left:1547.5px;top:994px;width:49.5px;height:26px;background:#cbcbcb;"></div>
<svg class="a" style="left:1563px;top:1000px;" width="18" height="16" viewBox="0 0 18 16"><g fill="none" stroke="#6a6a6a" stroke-width="1.1"><rect x="1.5" y="1.5" width="15" height="13"/><path d="M1.5 5.8 H16.5 M1.5 10.2 H16.5 M6.5 1.5 V14.5 M11.5 1.5 V14.5"/></g></svg>
<svg class="a" style="left:1612px;top:1000px;" width="18" height="16" viewBox="0 0 18 16"><g fill="none" stroke="#6a6a6a" stroke-width="1.1"><rect x="1.5" y="1.5" width="15" height="13"/><rect x="4.5" y="4.5" width="9" height="10"/><path d="M6.4 7.4 H11.6 M6.4 10 H11.6"/></g></svg>
<svg class="a" style="left:1662px;top:1000px;" width="18" height="16" viewBox="0 0 18 16"><g fill="none" stroke="#6a6a6a" stroke-width="1.1"><rect x="1.5" y="1.5" width="15" height="13"/><path d="M1.5 8 H9.5 V1.5 M9.5 8 V5 H16.5"/></g></svg>
<div class="a" style="left:1704.5px;top:1006.4px;width:8px;height:1.2px;background:#555;"></div>
<div class="a" style="left:1720px;top:1006.5px;width:125px;height:1px;background:#6a6a6a;"></div>
<div class="a" style="left:1780.4px;top:999px;width:5.6px;height:15px;background:#4a4a4a;"></div>
<svg class="a" style="left:1850px;top:1001px;" width="12" height="12" viewBox="0 0 12 12"><path d="M1.4 6 H10.6 M6 1.4 V10.6" stroke="#555" stroke-width="1.2" fill="none"/></svg>
<span class="t" style="top:999.62px;font-size:13.5px;line-height:16px;color:#3a3a3a;left:1878.60px;transform:scaleX(0.8572);">100%</span>
<div class="a" style="left:0px;top:1020px;width:1920px;height:60px;background:linear-gradient(90deg,#cee3f0 0%,#cee6f2 36%,#d4e8f3 78%,#d9e8f3 100%);"></div>
<div class="a" style="left:0px;top:1020px;width:1920px;height:1px;background:#b9c3cc;"></div>
<svg class="a" style="left:160px;top:1036px;" width="31" height="30" viewBox="0 0 31 30"><defs><linearGradient id="wg" x1="0" y1="0" x2="1" y2="1"><stop offset="0" stop-color="#5fd0ff"/><stop offset="1" stop-color="#0a78d6"/></linearGradient></defs>
<g fill="url(#wg)"><rect x="0.8" y="0.4" width="14" height="14" rx="0.8"/><rect x="15.9" y="0.4" width="14" height="14" rx="0.8"/><rect x="0.8" y="15.5" width="14" height="14" rx="0.8"/><rect x="15.9" y="15.5" width="14" height="14" rx="0.8"/></g></svg>
<div class="a" style="left:208.3px;top:1031px;width:272.6px;height:38.4px;background:linear-gradient(180deg,#f2f8fc,#e8f1f8);border:1px solid #dfe9f1;box-sizing:border-box;border-radius:19.2px;"></div>
<svg class="a" style="left:220px;top:1039px;" width="22" height="22" viewBox="0 0 22 22"><circle cx="9.4" cy="9.4" r="6.8" fill="none" stroke="#1f1f1f" stroke-width="1.9"/><path d="M14.4 14.4 L19.4 19.4" stroke="#1f1f1f" stroke-width="2.2" stroke-linecap="round"/></svg>
<span class="t" style="top:1040.64px;font-size:17.5px;line-height:21px;color:#5c5c5c;left:253.30px;transform:scaleX(0.9197);">Search</span>
<svg class="a" style="left:496px;top:1034px;" width="32" height="32" viewBox="0 0 32 32"><defs>
<linearGradient id="cp1" x1="0.7" y1="0" x2="0.2" y2="1"><stop offset="0" stop-color="#2a6fe0"/><stop offset="0.3" stop-color="#28a8d8"/><stop offset="0.6" stop-color="#4cc060"/><stop offset="1" stop-color="#f2c83a"/></linearGradient>
<linearGradient id="cp2" x1="0.7" y1="0" x2="0.3" y2="1"><stop offset="0" stop-color="#b05ce8"/><stop offset="0.5" stop-color="#ee5c9c"/><stop offset="1" stop-color="#ff8a2a"/></linearGradient></defs>
<path d="M12 2.4 H18.4 Q21.4 2.4 22.2 5.4 L23.6 10.4 H15 L12.6 19.6 Q11.8 22.6 8.6 22.6 H5.4 Q1 22.6 1.6 18 Q2.6 11 6.2 5.4 Q8.2 2.4 12 2.4 Z" fill="url(#cp1)"/>
<path d="M20.4 29.8 H14 Q11 29.8 10.2 26.8 L8.8 21.8 H17.4 L19.8 12.6 Q20.6 9.6 23.8 9.6 H27 Q31.4 9.6 30.8 14.2 Q29.8 21.2 26.2 26.8 Q24.2 29.8 20.4 29.8 Z" fill="url(#cp2)"/>
<path d="M15 10.4 H19.4 L17.4 21.8 H13 Z" fill="#f4ece6" opacity="0.75"/></svg>
<svg class="a" style="left:555px;top:1035px;" width="24" height="30" viewBox="0 0 24 30"><rect x="1" y="1" width="21.6" height="28" rx="10.8" fill="#0a84ff"/><path d="M7 10 L16.4 19 L11.8 23.4 V6.6 L16.4 11 L7 20" fill="none" stroke="#fff" stroke-width="1.7" stroke-linejoin="round"/></svg>
<svg class="a" style="left:606px;top:1034px;" width="32" height="32" viewBox="0 0 32 32"><path d="M10.6 7.6 V5 Q10.6 3.2 12.4 3.2 H19.6 Q21.4 3.2 21.4 5 V7.6" fill="none" stroke="#45b4f0" stroke-width="2"/>
<defs><linearGradient id="stg" x1="0" y1="0" x2="0" y2="1"><stop offset="0" stop-color="#1d5aa8"/><stop offset="1" stop-color="#143c7c"/></linearGradient></defs><path d="M1.6 6.4 H30.4 V26.4 Q30.4 30.6 26.2 30.6 H5.8 Q1.6 30.6 1.6 26.4 Z" fill="url(#stg)"/>
<rect x="10" y="12.6" width="5.2" height="5.2" fill="#f25022"/><rect x="16.2" y="12.6" width="5.2" height="5.2" fill="#7fba00"/><rect x="10" y="18.8" width="5.2" height="5.2" fill="#00a4ef"/><rect x="16.2" y="18.8" width="5.2" height="5.2" fill="#ffb900"/></svg>
<svg class="a" style="left:663px;top:1035.6px;" width="28" height="28" viewBox="0 0 28 28"><defs><linearGradient id="tg" x1="0" y1="0" x2="0" y2="1"><stop offset="0" stop-color="#37aee2"/><stop offset="1" stop-color="#1e96c8"/></linearGradient></defs><circle cx="14" cy="14" r="13.6" fill="url(#tg)"/><path d="M5.6 13.8 L21.4 7.6 L18.8 20.6 L13.8 17 L11.6 19.4 L11.4 15.6 L18.4 10 L9.6 15 Z" fill="#fff"/></svg>
<svg class="a" style="left:717px;top:1035px;" width="30" height="30" viewBox="0 0 30 30"><rect x="0" y="0" width="30" height="30" rx="3" fill="#1e1e1e"/>
<path d="M11.6 6 H15 V12 H11.6 A3 3 0 0 1 11.6 6 Z" fill="#f24e1e"/><path d="M15 6 H18.4 A3 3 0 0 1 18.4 12 H15 Z" fill="#ff7262"/>
<path d="M11.6 12 H15 V18 H11.6 A3 3 0 0 1 11.6 12 Z" fill="#a259ff"/><circle cx="18.2" cy="15" r="3" fill="#1abcfe"/>
<path d="M11.6 18 H15 V21 A3 3 0 1 1 11.6 18 Z" fill="#0acf83"/></svg>
<svg class="a" style="left:772px;top:1035.4px;" width="30" height="27.6" viewBox="0 0 30 27.6"><rect x="1.2" y="1.2" width="27.4" height="25" rx="3.6" fill="#0a1826" stroke="#3fb0ea" stroke-width="2"/><text x="14.9" y="20.2" font-size="17" fill="#f2faff" text-anchor="middle" font-family="Liberation Sans, sans-serif">Ps</text></svg>
<svg class="a" style="left:827px;top:1035.4px;" width="30" height="27.6" viewBox="0 0 30 27.6"><rect x="1.2" y="1.2" width="27.4" height="25" rx="1" fill="#2a0c00" stroke="#e8801a" stroke-width="2"/><text x="14.9" y="20.2" font-size="18" fill="#ff9a1e" text-anchor="middle" font-family="Liberation Sans, sans-serif">Ai</text></svg>
<svg class="a" style="left:881px;top:1034px;" width="32" height="32" viewBox="0 0 32 32"><path d="M3 14 L18.6 3 L30 11.6 V27 H3 Z" fill="#2a6fd6"/><path d="M13 6.8 L24.6 2.6 L30 11.6 L16 20 Z" fill="#4a56c8"/>
<path d="M3 15.4 L16.4 22.6 L30 15 V26.6 Q30 28.6 28 28.6 H5 Q3 28.6 3 26.6 Z" fill="#35b8f2"/><path d="M3 18 L20 28.6 H5 Q3 28.6 3 26.6 Z" fill="#1a8ee0"/>
<circle cx="8.4" cy="21.4" r="4.4" fill="#eaf4ff" opacity="0.9"/><circle cx="8.4" cy="21.4" r="2" fill="#3b8be0"/></svg>
<svg class="a" style="left:936px;top:1028px;" width="40" height="42" viewBox="0 0 40 42"><g transform="translate(-1.2 4.4) scale(1.1)"><path d="M2.6 31.8 L4.8 24.4 A13.6 13.6 0 1 1 10.2 29.8 Z" fill="#fff"/>
<path d="M4.6 29.8 L6.2 24.2 A12.2 12.2 0 1 1 10.4 28.2 Z" fill="none" stroke="#2a9d55" stroke-width="2.4" stroke-linejoin="round"/>
<path d="M11.8 12.6 Q12.8 11.4 13.8 12.8 L14.8 14.8 Q15 15.4 14.4 16.2 Q13.8 17 14.6 18 Q16 20 18.2 21 Q19 21.4 19.6 20.6 L20.4 19.8 Q20.8 19.4 21.8 19.8 L23.4 20.8 Q24 21.2 23.4 22.4 Q22.2 24.6 19.8 24 Q14.2 22.4 11.6 16.6 Q10.8 14 11.8 12.6 Z" fill="#2a9d55"/></g>
<circle cx="27" cy="12" r="10.4" fill="#1583e0"/>
<text x="27" y="16.4" font-size="11.5" fill="#fff" text-anchor="middle" font-family="DejaVu Sans, sans-serif">١٩</text></svg>
<div class="a" style="left:947.6px;top:1070.2px;width:7.6px;height:3.6px;background:#8a96a0;border-radius:1.8px;"></div>
<svg class="a" style="left:994px;top:1034px;" width="26" height="32" viewBox="0 0 26 32"><rect x="1" y="1" width="23.4" height="29.6" rx="2.4" fill="#5f6f80"/><rect x="3.6" y="3.8" width="18.2" height="5.8" fill="#3fb4f2"/>
<g fill="#e8ecf0"><rect x="3.6" y="12" width="5" height="4.6"/><rect x="10.2" y="12" width="5" height="4.6"/><rect x="16.8" y="12" width="5" height="4.6"/><rect x="3.6" y="18" width="5" height="4.6"/><rect x="10.2" y="18" width="5" height="4.6"/><rect x="3.6" y="24" width="5" height="4.6"/><rect x="10.2" y="24" width="5" height="4.6"/></g>
<rect x="16.8" y="18" width="5" height="10.6" fill="#1d4f91"/></svg>
<svg class="a" style="left:1046px;top:1034px;" width="34" height="34" viewBox="0 0 34 34"><defs><linearGradient id="eg" x1="0" y1="0" x2="1" y2="0"><stop offset="0" stop-color="#1a9ae0"/><stop offset="0.55" stop-color="#35c1b0"/><stop offset="1" stop-color="#6fd64a"/></linearGradient></defs>
<path d="M2 16 Q2.4 3 16 2 Q27.6 2 30.8 12.6 Q31.2 19 25.6 19.4 H18.6 Q18.8 14 14.2 13.2 Q8.6 13.4 8 20 Q8.2 27 15.4 30.6 Q3 30.4 2 16 Z" fill="url(#eg)"/>
<path d="M8 20 Q8.2 27 15.4 30.6 Q24.6 31.6 29.6 23.6 Q24 26.6 19 24 Q15.6 21.4 17 17.6 Q13 15 8 20 Z" fill="#1470c4"/>
<path d="M2 16 Q2 24 8.6 29 Q5 23 8 18 Q10.6 13.6 14.2 13.2 Q6.6 9.4 2 16 Z" fill="#0f5fae"/>
<rect x="3" y="21.6" width="13" height="9.6" fill="#e29a2c"/><rect x="3" y="25.6" width="13" height="5.6" fill="#8a4a10"/><path d="M6.4 21.6 V19.8 Q9.5 17.4 12.6 19.8 V21.6" fill="none" stroke="#e8ecf0" stroke-width="1.4"/></svg>
<div class="a" style="left:1058.2px;top:1070.2px;width:7.6px;height:3.6px;background:#8a96a0;border-radius:1.8px;"></div>
<svg class="a" style="left:1101px;top:1034px;" width="32" height="32" viewBox="0 0 32 32"><path d="M3.6 11.4 L22.8 26.6" stroke="#1a86dc" stroke-width="4.8" stroke-linecap="round"/>
<path d="M3.6 20.6 L22.8 5.4" stroke="#2a9cf0" stroke-width="4.8" stroke-linecap="round"/>
<path d="M22.4 1.4 L30.6 5.2 V26.8 L22.4 30.6 L19.6 28 V4 Z" fill="#2f9ff2"/>
<path d="M22.4 1.4 L30.6 5.2 V26.8 L22.4 30.6 Z" fill="#1f8ae0"/>
<path d="M22.4 10.6 L15.2 16 L22.4 21.4 Z" fill="#d1e7f2"/></svg>
<svg class="a" style="left:1156px;top:1038px;" width="32" height="24" viewBox="0 0 32 24"><rect x="0.8" y="0.8" width="30.4" height="22" rx="2.2" fill="#2f2f2f"/><rect x="0.8" y="0.8" width="30.4" height="4.6" rx="2.2" fill="#6a6a6a"/>
<path d="M6 9.6 L11.6 13.6 L6 17.6" fill="none" stroke="#f2f2f2" stroke-width="2.2"/><path d="M14 18.4 H23.6" stroke="#f2f2f2" stroke-width="2.4"/></svg>
<svg class="a" style="left:1212px;top:1035px;" width="29" height="29" viewBox="0 0 29 29"><circle cx="14.5" cy="14" r="13.4" fill="#fdfdfd"/><circle cx="14.5" cy="14" r="11" fill="none" stroke="#2e3a4a" stroke-width="1.8" stroke-dasharray="55 14" transform="rotate(40 14.5 14)"/><text x="14.6" y="17.6" font-size="12.5" font-weight="700" fill="#2e3a4a" text-anchor="middle" font-family="Liberation Sans, sans-serif">cy</text></svg>
<svg class="a" style="left:1267px;top:1034.4px;" width="30" height="30" viewBox="0 0 30 30"><circle cx="15" cy="15" r="14.8" fill="#f2622e"/><path d="M8 22.4 L10 18.4 L18.6 9.8 L20.6 11.8 L12 20.4 Z" fill="#fff"/><circle cx="21" cy="9.2" r="2.6" fill="none" stroke="#fff" stroke-width="1.4"/><path d="M7.4 23 L11 21.6" stroke="#fff" stroke-width="1.2"/></svg>
<svg class="a" style="left:1321px;top:1030px;" width="40" height="38" viewBox="0 0 40 38"><defs><linearGradient id="tm" x1="0" y1="0" x2="1" y2="1"><stop offset="0" stop-color="#8a8cf0"/><stop offset="1" stop-color="#5a4fd0"/></linearGradient></defs>
<circle cx="11.4" cy="9.4" r="4.6" fill="#9a9cf2"/>
<path d="M6 15 H26.4 Q29.6 15 29.6 18.2 V26 Q29.2 33.6 21.6 34 H14 Q6.4 33.6 6 26 Z" fill="url(#tm)"/>
<path d="M18 15 H26.4 Q29.6 15 29.6 18.2 V26 Q29.2 33 22 34 Q18 30 18 24 Z" fill="#5b50d6" opacity="0.55"/>
<rect x="0.8" y="18.8" width="12.6" height="12.6" rx="2.4" fill="#4b46c0"/>
<path d="M4 22.2 H10.2 M7.1 22.2 V28.6" stroke="#fff" stroke-width="1.8" fill="none"/>
<circle cx="27" cy="8.8" r="8.8" fill="#13a10e"/><path d="M22.8 9 L25.8 11.8 L31 6.2" fill="none" stroke="#fff" stroke-width="2"/></svg>
<div class="a" style="left:1333.2px;top:1070.2px;width:7.6px;height:3.6px;background:#8a96a0;border-radius:1.8px;"></div>
<svg class="a" style="left:1376px;top:1035px;" width="30" height="30" viewBox="0 0 30 30"><defs><clipPath id="wc"><rect x="5.6" y="1.4" width="21.4" height="26.6" rx="3.4"/></clipPath></defs>
<g clip-path="url(#wc)"><rect x="5" y="1" width="23" height="9.6" fill="#55c4f6"/><rect x="5" y="10.4" width="23" height="9" fill="#2b8cec"/><rect x="5" y="19.2" width="23" height="9.4" fill="#1756c8"/></g>
<rect x="0.8" y="13.6" width="12.4" height="12.4" rx="2.4" fill="#1b4fc0"/><path d="M3 16.8 L4.8 22.8 L7 17.6 L9.2 22.8 L11 16.8" fill="none" stroke="#fff" stroke-width="1.5" stroke-linejoin="round"/></svg>
<div class="a" style="left:1388px;top:1070.2px;width:7.6px;height:3.6px;background:#8a96a0;border-radius:1.8px;"></div>
<div class="a" style="left:1423.4px;top:1026px;width:47.6px;height:48px;background:rgba(255,255,255,0.55);border:1px solid rgba(255,255,255,0.7);box-sizing:border-box;border-radius:5px;"></div>
<svg class="a" style="left:1430px;top:1035px;" width="32" height="30" viewBox="0 0 32 30"><defs><clipPath id="xc"><rect x="5.6" y="0.8" width="22.6" height="27.8" rx="3.4"/></clipPath></defs>
<g clip-path="url(#xc)"><rect x="5" y="0" width="12" height="13" fill="#6ac65a"/><rect x="16.6" y="0" width="12" height="10" fill="#8fdc6c"/><rect x="5" y="12" width="12" height="17" fill="#2c8a3c"/><rect x="16.6" y="9.6" width="12" height="20" fill="#3a9a3e"/><rect x="16.6" y="19" width="12" height="10" fill="#2b8a38"/></g>
<rect x="1.6" y="13.4" width="12.4" height="12.4" rx="2.6" fill="#1d7a44"/><path d="M5 16.6 L10.6 22.8 M10.6 16.6 L5 22.8" stroke="#fff" stroke-width="1.7"/></svg>
<div class="a" style="left:1437.2px;top:1069.8px;width:19.6px;height:4px;background:#0a6ccc;border-radius:2px;"></div>
<svg class="a" style="left:1559px;top:1044px;" width="17" height="12" viewBox="0 0 17 12"><path d="M2 9.2 L8.2 3 L14.4 9.2" fill="none" stroke="#1a1a1a" stroke-width="2"/></svg>
<svg class="a" style="left:1596px;top:1040px;" width="24" height="22" viewBox="0 0 24 22"><path d="M6.4 15.6 Q2 15.6 2 11.6 Q2.2 8 6 8 Q7.4 3 12.4 3.4 Q17 4 17.6 8.4 Q20 8.8 20.4 11" fill="#c9cdd1" stroke="#5a5a5a" stroke-width="1.3"/>
<circle cx="15.4" cy="15" r="5.6" fill="#e0242c"/><path d="M13.2 12.8 L17.6 17.2 M17.6 12.8 L13.2 17.2" stroke="#fff" stroke-width="1.5"/></svg>
<svg class="a" style="left:1639px;top:1039px;" width="16" height="22" viewBox="0 0 16 22"><rect x="4.8" y="1.6" width="6.4" height="12" rx="3.2" fill="none" stroke="#0a64c0" stroke-width="1.6"/><path d="M1.6 10.4 A6.4 6.4 0 0 0 14.4 10.4 M8 17 V20.6" fill="none" stroke="#0a64c0" stroke-width="1.6"/></svg>
<span class="t" style="top:1042.21px;font-size:15px;line-height:18px;color:#1a1a1a;font-family:'DejaVu Sans', 'Liberation Sans', sans-serif;left:1689.60px;transform:scaleX(1.0499);">ع</span>
<svg class="a" style="left:1731px;top:1041px;" width="22" height="18" viewBox="0 0 22 18"><g fill="none" stroke="#1a1a1a" stroke-width="1.5" stroke-linecap="round"><path d="M1.6 6.4 Q11 -1.6 20.4 6.4"/><path d="M4.6 9.6 Q11 4.2 17.4 9.6"/><path d="M7.6 12.6 Q11 9.8 14.4 12.6"/></g><circle cx="11" cy="15.2" r="1.5" fill="#1a1a1a"/></svg>
<svg class="a" style="left:1761px;top:1041px;" width="22" height="18" viewBox="0 0 22 18"><g fill="none" stroke="#1a1a1a" stroke-width="1.4" stroke-linecap="round" stroke-linejoin="round"><path d="M1.6 6.4 H4.6 L9 2.4 V15.6 L4.6 11.6 H1.6 Z"/><path d="M11.8 6.4 Q13.4 9 11.8 11.6"/><path d="M14.4 4.4 Q17.4 9 14.4 13.6"/><path d="M17 2.4 Q21.2 9 17 15.6"/></g></svg>
<svg class="a" style="left:1791px;top:1039px;" width="22" height="18" viewBox="0 0 22 18"><rect x="1.6" y="5.6" width="16.4" height="10" rx="2.4" fill="none" stroke="#1a1a1a" stroke-width="1.4"/><rect x="3.8" y="7.8" width="12" height="5.6" rx="1" fill="#1a1a1a"/><path d="M19.6 8.6 V12.6" stroke="#1a1a1a" stroke-width="1.8" stroke-linecap="round"/><path d="M3 1.4 L5 4.6 M6.6 1 V4.4 M1 3.8 L4 5.4" stroke="#1a1a1a" stroke-width="1.2" fill="none"/></svg>
<span class="t" style="top:1031.88px;font-size:14.5px;line-height:17px;color:#1a1a1a;font-family:'DejaVu Sans', 'Liberation Sans', sans-serif;direction:ltr;unicode-bidi:bidi-override;left:1852.40px;transform:scaleX(0.8584);">م ٠٧:١٣</span>
<span class="t" style="top:1051.68px;font-size:14.5px;line-height:17px;color:#1a1a1a;font-family:'DejaVu Sans', 'Liberation Sans', sans-serif;direction:ltr;unicode-bidi:bidi-override;left:1833.00px;transform:scaleX(0.8602);">٢٠٢٥/١٢/٢٨</span>
<span class="t" style="top:959.82px;font-size:54px;line-height:65px;color:rgba(120,120,120,0.12);font-family:'DejaVu Sans', 'Liberation Sans', sans-serif;font-weight:700;direction:rtl;left:854.00px;transform:scaleX(1.2829);">نفذلي</span>
<span class="t" style="top:1033.72px;font-size:34px;line-height:41px;color:rgba(255,255,255,0.09);font-weight:700;left:872.00px;transform:scaleX(0.9682);">nafezly.com</span>
<div class="a" style="left:1519.3px;top:888.8px;width:383.6px;height:114.6px;background:#121314;border-radius:10px;box-shadow:0 3px 14px 2px rgba(0,0,0,0.38);overflow:hidden;"><div class="a" style="left:0;top:0;width:100%;height:41px;background:#202124;"></div><div class="a" style="left:0;top:41px;width:100%;height:1px;background:#35363a;"></div><div class="a" style="left:33px;top:102.4px;width:319px;height:40px;border-radius:13px;background:#262627;"></div></div>
<svg class="a" style="left:1534px;top:897px;" width="20" height="22" viewBox="0 0 20 22"><g fill="none" stroke="#9aa0a6" stroke-width="1.5"><rect x="3" y="8.4" width="13.6" height="11" rx="2"/><path d="M6.4 8.4 V6.2 A3.4 3.4 0 0 1 13.2 6.2 V8.4"/></g><circle cx="9.8" cy="13.8" r="1.5" fill="#9aa0a6"/></svg>
<span class="t" style="top:898.64px;font-size:19.5px;line-height:23px;color:#9aa0a6;left:1564.30px;transform:scaleX(0.9196);">https://meet.google.com</span>
<svg class="a" style="left:1826px;top:899px;" width="16" height="20" viewBox="0 0 16 20"><rect x="5.6" y="2.2" width="4.8" height="9.4" rx="2.4" fill="#9aa0a6"/><path d="M2.8 9.4 A5.2 5.2 0 0 0 13.2 9.4 M8 14.6 V17.4" fill="none" stroke="#9aa0a6" stroke-width="1.4"/></svg>
<div class="a" style="left:1537px;top:931.3px;width:50px;height:40px;background:#fbbc04;border-radius:6px;"></div>
<svg class="a" style="left:1549px;top:938px;" width="26" height="26" viewBox="0 0 26 26"><g fill="none" stroke="#2e2200" stroke-width="2.3"><path d="M2 23.4 H24"/><path d="M5.6 23 V3.4 H15.4 V23"/><path d="M15.4 5.4 H20.4 V23"/></g><circle cx="11.8" cy="13.6" r="1.3" fill="#3a2c00"/></svg>
<div class="a" style="left:1592px;top:931.3px;width:50px;height:40px;background:#d93025;border-radius:6px;"></div>
<svg class="a" style="left:1604px;top:938px;" width="26" height="26" viewBox="0 0 26 26"><circle cx="13" cy="13" r="10.6" fill="none" stroke="#fff" stroke-width="2.6"/><circle cx="13" cy="13" r="5.6" fill="#fff"/></svg>
<div class="a" style="left:1647px;top:931.3px;width:240px;height:40px;background:#3c4043;border-radius:6px;"></div>
<div class="a" style="left:1661.8px;top:935.8px;width:30px;height:30px;background:#78909c;border-radius:15px;"></div>
<span class="t" style="top:940.71px;font-size:17px;line-height:20px;color:#fff;left:1669.40px;transform:scaleX(1.0302);">M</span>
<span class="t" style="top:941.03px;font-size:15.5px;line-height:19px;color:#fff;-webkit-text-stroke:0.3px #fff;left:1701.80px;transform:scaleX(0.9502);">Menna Hamid (Presenti...</span>
<div class="a" style="left:1717.6px;top:976.6px;width:3px;height:3px;background:#4a4a4a;border-radius:2px;"></div>
<svg class="a" style="left:1520px;top:988px;" width="16" height="15" viewBox="0 0 16 15"><path d="M2 3.4 L13 14.4 M1.4 8.6 L8 15" stroke="#8a8a8a" stroke-width="1.6" fill="none"/></svg>
</div>
</body>
</html>
